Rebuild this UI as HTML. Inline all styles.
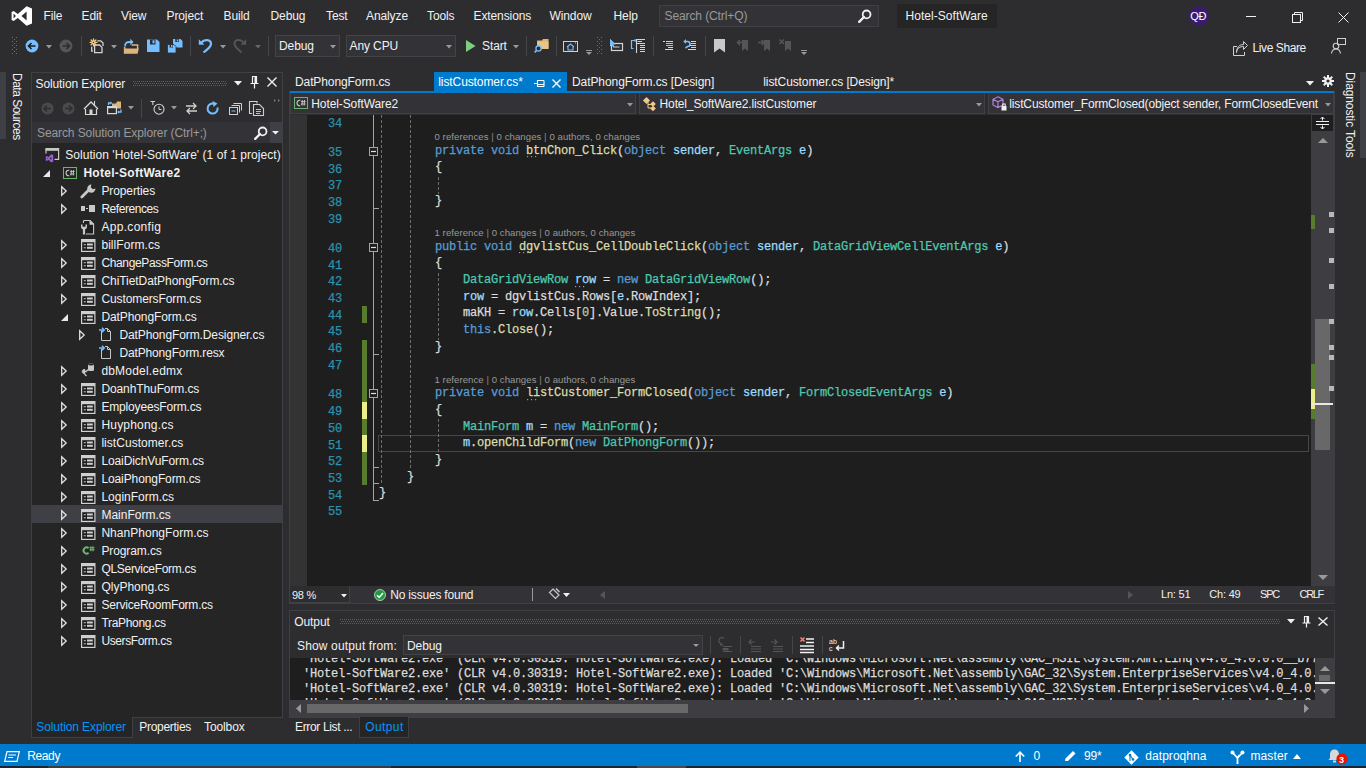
<!DOCTYPE html>
<html><head><meta charset="utf-8">
<style>
*{margin:0;padding:0;box-sizing:border-box}
html,body{width:1366px;height:768px;overflow:hidden;background:#2d2d30;font-family:"Liberation Sans",sans-serif;font-size:12px;color:#f1f1f1}
.a{position:absolute}
.t{position:absolute;white-space:pre;line-height:1;letter-spacing:-0.1px}
.c{position:absolute;white-space:pre;font-family:"Liberation Mono",monospace;font-size:12px;line-height:15px;letter-spacing:-0.2px;color:#dcdcdc;-webkit-text-stroke:0.25px currentColor}
svg{position:absolute;overflow:visible}
.k{color:#569cd6}.ty{color:#4ec9b0}.m{color:#dcdcaa}.p{color:#9cdcfe}.n{color:#b5cea8}
</style></head><body>

<div class="a" style="left:0px;top:0px;width:1366px;height:30px;background:#2d2d30;"></div>
<svg style="left:11px;top:6px" width="22" height="20" viewBox="0 0 22 20"><path d="M15.6 0.2 L21 2.6 V17.4 L15.6 19.8 L6.8 11.9 L2.6 15.1 L0.6 14.1 V5.9 L2.6 4.9 L6.8 8.1 Z M15.6 5.6 L10.5 10 L15.6 14.4 Z M2.6 7.6 V12.4 L4.9 10 Z" fill="#fff" fill-rule="evenodd"/></svg>
<div class="t" style="left:43.5px;top:9.84px;font-size:12px;color:#f1f1f1;">File</div>
<div class="t" style="left:81.5px;top:9.84px;font-size:12px;color:#f1f1f1;">Edit</div>
<div class="t" style="left:121px;top:9.84px;font-size:12px;color:#f1f1f1;">View</div>
<div class="t" style="left:166.5px;top:9.84px;font-size:12px;color:#f1f1f1;">Project</div>
<div class="t" style="left:223.5px;top:9.84px;font-size:12px;color:#f1f1f1;">Build</div>
<div class="t" style="left:270.5px;top:9.84px;font-size:12px;color:#f1f1f1;">Debug</div>
<div class="t" style="left:326px;top:9.84px;font-size:12px;color:#f1f1f1;">Test</div>
<div class="t" style="left:366px;top:9.84px;font-size:12px;color:#f1f1f1;">Analyze</div>
<div class="t" style="left:427px;top:9.84px;font-size:12px;color:#f1f1f1;">Tools</div>
<div class="t" style="left:473.5px;top:9.84px;font-size:12px;color:#f1f1f1;">Extensions</div>
<div class="t" style="left:549.5px;top:9.84px;font-size:12px;color:#f1f1f1;">Window</div>
<div class="t" style="left:613.5px;top:9.84px;font-size:12px;color:#f1f1f1;">Help</div>
<div class="a" style="left:659px;top:5px;width:220px;height:22px;background:#333337;border:1px solid #3f3f46"></div>
<div class="t" style="left:664.5px;top:9.84px;font-size:12px;color:#999999;">Search (Ctrl+Q)</div>
<svg style="left:858px;top:9px" width="14" height="14" viewBox="0 0 14 14"><circle cx="8.6" cy="5.4" r="3.9" fill="none" stroke="#f1f1f1" stroke-width="1.8"/><path d="M6 8 L1.2 12.8" stroke="#f1f1f1" stroke-width="2.4" stroke-linecap="round"/></svg>
<div class="a" style="left:897px;top:4px;width:100px;height:24px;background:#252526;"></div>
<div class="t" style="left:905.5px;top:9.84px;font-size:12px;color:#f1f1f1;letter-spacing:0.05px">Hotel-SoftWare</div>
<svg style="left:1189px;top:6px" width="20" height="20" viewBox="0 0 20 20"><circle cx="10" cy="10" r="10" fill="#3b1b6e"/></svg>
<div class="t" style="left:1190.3px;top:11.19px;font-size:11px;color:#ffffff;letter-spacing:-0.4px">QĐ</div>
<div class="a" style="left:1246px;top:16px;width:10px;height:1px;background:#f1f1f1;"></div>
<svg style="left:1292px;top:12px" width="11" height="11" viewBox="0 0 11 11"><path d="M2.5 2.5 V0.5 H10.5 V8.5 H8.5" fill="none" stroke="#f1f1f1" stroke-width="1"/><rect x="0.5" y="2.5" width="8" height="8" fill="none" stroke="#f1f1f1" stroke-width="1"/></svg>
<svg style="left:1338px;top:12px" width="11" height="11" viewBox="0 0 11 11"><path d="M0.5 0.5 L10.5 10.5 M10.5 0.5 L0.5 10.5" stroke="#f1f1f1" stroke-width="1"/></svg>
<svg style="left:12px;top:37px" width="6" height="18" viewBox="0 0 6 18"><rect x="0" y="0" width="1" height="1" fill="#707070"/><rect x="4" y="0" width="1" height="1" fill="#707070"/><rect x="2" y="2" width="1" height="1" fill="#707070"/><rect x="0" y="4" width="1" height="1" fill="#707070"/><rect x="4" y="4" width="1" height="1" fill="#707070"/><rect x="2" y="6" width="1" height="1" fill="#707070"/><rect x="0" y="8" width="1" height="1" fill="#707070"/><rect x="4" y="8" width="1" height="1" fill="#707070"/><rect x="2" y="10" width="1" height="1" fill="#707070"/><rect x="0" y="12" width="1" height="1" fill="#707070"/><rect x="4" y="12" width="1" height="1" fill="#707070"/><rect x="2" y="14" width="1" height="1" fill="#707070"/><rect x="0" y="16" width="1" height="1" fill="#707070"/><rect x="4" y="16" width="1" height="1" fill="#707070"/></svg>
<svg style="left:25px;top:39px" width="14" height="14" viewBox="0 0 14 14"><circle cx="7" cy="7" r="6.4" fill="#75beff"/><path d="M3.5 7 H10.5 M6.5 4 L3.5 7 L6.5 10" fill="none" stroke="#1e1e1e" stroke-width="1.6"/></svg>
<svg style="left:46px;top:45px" width="6" height="3.5" viewBox="0 0 6 3.5"><path d="M0 0 H6 L3.0 3.5 Z" fill="#999999"/></svg>
<svg style="left:59px;top:39px" width="14" height="14" viewBox="0 0 14 14"><circle cx="7" cy="7" r="6.4" fill="#555557"/><path d="M3.5 7 H10.5 M7.5 4 L10.5 7 L7.5 10" fill="none" stroke="#2d2d30" stroke-width="1.6"/></svg>
<div class="a" style="left:81px;top:36px;width:1px;height:20px;background:#46464a;"></div>
<svg style="left:89px;top:38px" width="16" height="16" viewBox="0 0 16 16"><path d="M8.3 2.8 H11.8 L14 5 V8" fill="none" stroke="#d4d4d4" stroke-width="1.3"/><path d="M2.7 8.8 V13 H3.8" fill="none" stroke="#d4d4d4" stroke-width="1.3"/><path d="M5.6 7 H10.6 L13 9.4 V14.6 H5.6 Z" fill="#2d2d30" stroke="#d4d4d4" stroke-width="1.3"/><g stroke="#f5c978" stroke-width="1.3" stroke-linecap="round"><path d="M4.5 1 V7.8 M1.1 4.4 H7.9 M2.1 2 L6.9 6.8 M6.9 2 L2.1 6.8"/></g><circle cx="4.5" cy="4.4" r="1.5" fill="#f5c978"/><circle cx="4.5" cy="4.4" r="0.6" fill="#2d2d30"/></svg>
<svg style="left:111px;top:45px" width="6" height="3.5" viewBox="0 0 6 3.5"><path d="M0 0 H6 L3.0 3.5 Z" fill="#999999"/></svg>
<svg style="left:122px;top:38px" width="17" height="17" viewBox="0 0 17 17"><path d="M2.6 15.5 V9" fill="none" stroke="#dcb67a" stroke-width="1.5"/><path d="M9.5 7 H15.6 V11" fill="none" stroke="#dcb67a" stroke-width="1.5"/><path d="M2 10.5 H16.8 L15.6 15.8 H2 Z" fill="#dcb67a"/><path d="M3.3 8.5 C2.6 5.5 4.3 4 7.8 4 H9" fill="none" stroke="#75beff" stroke-width="1.8"/><path d="M8.3 0.8 L11.6 4 L8.3 7.2 Z" fill="#75beff"/></svg>
<svg style="left:147px;top:39px" width="13" height="14" viewBox="0 0 13 14"><path d="M0 0.5 H10 L12.5 3 V13 H0 Z" fill="#75beff"/><rect x="3" y="0.5" width="5.5" height="5" fill="#2d2d30"/><rect x="5.5" y="1.3" width="2" height="3" fill="#75beff"/></svg>
<svg style="left:167px;top:38px" width="16" height="16" viewBox="0 0 16 16"><path d="M6 1 H13.5 L15.5 3 V9.5 H6 Z" fill="#75beff"/><rect x="8.3" y="1" width="3.6" height="3" fill="#2d2d30"/><rect x="9.8" y="1.5" width="1.4" height="2" fill="#75beff"/><path d="M0.5 6.5 H7 L9 8.5 V15 H0.5 Z" fill="#75beff" stroke="#2d2d30" stroke-width="0.8"/><rect x="2.6" y="6.5" width="3.4" height="3" fill="#2d2d30"/><rect x="4" y="7" width="1.4" height="2" fill="#75beff"/></svg>
<div class="a" style="left:190px;top:36px;width:1px;height:20px;background:#46464a;"></div>
<svg style="left:197px;top:37px" width="16" height="17" viewBox="0 0 16 17"><path d="M4.5 5.5 C7 2 14 2 14 7 C14 9.5 11.5 11.5 6.5 15.5" fill="none" stroke="#75beff" stroke-width="2.2"/><path d="M1.8 2.2 V7.8 H7.4 Z" fill="#75beff"/></svg>
<svg style="left:220px;top:45px" width="6" height="3.5" viewBox="0 0 6 3.5"><path d="M0 0 H6 L3.0 3.5 Z" fill="#999999"/></svg>
<svg style="left:233px;top:37px" width="16" height="17" viewBox="0 0 16 17"><path d="M10.5 5.5 C8 2 1.5 2 1.5 7 C1.5 9.5 4 11.5 8.5 15.5" fill="none" stroke="#555557" stroke-width="2"/><path d="M13.2 2.2 V7.8 H7.6 Z" fill="#555557"/></svg>
<svg style="left:255px;top:45px" width="6" height="3.5" viewBox="0 0 6 3.5"><path d="M0 0 H6 L3.0 3.5 Z" fill="#666"/></svg>
<div class="a" style="left:268px;top:36px;width:1px;height:20px;background:#46464a;"></div>
<div class="a" style="left:275px;top:35px;width:65px;height:22px;background:#333337;border:1px solid #434346"></div>
<div class="t" style="left:279px;top:40.34px;font-size:12px;color:#f1f1f1;">Debug</div>
<svg style="left:330px;top:45px" width="6" height="3.5" viewBox="0 0 6 3.5"><path d="M0 0 H6 L3.0 3.5 Z" fill="#999999"/></svg>
<div class="a" style="left:346px;top:35px;width:110px;height:22px;background:#333337;border:1px solid #434346"></div>
<div class="t" style="left:349.5px;top:40.34px;font-size:12px;color:#f1f1f1;">Any CPU</div>
<svg style="left:446px;top:45px" width="6" height="3.5" viewBox="0 0 6 3.5"><path d="M0 0 H6 L3.0 3.5 Z" fill="#999999"/></svg>
<svg style="left:466px;top:40px" width="10" height="12" viewBox="0 0 10 12"><path d="M0 0 L9.6 6 L0 12 Z" fill="#80cc80"/></svg>
<div class="t" style="left:482px;top:40.34px;font-size:12px;color:#f1f1f1;">Start</div>
<svg style="left:513px;top:45px" width="6" height="3.5" viewBox="0 0 6 3.5"><path d="M0 0 H6 L3.0 3.5 Z" fill="#999999"/></svg>
<div class="a" style="left:526px;top:36px;width:1px;height:20px;background:#46464a;"></div>
<svg style="left:534px;top:38px" width="15" height="15" viewBox="0 0 15 15"><path d="M3 2.5 H8 L9 1 H14.5 V10.5 H3 Z" fill="#dcb67a"/><path d="M3.5 3.5 H14.5 V11 H3.5 Z" fill="#e8c48a"/><circle cx="4.5" cy="10.5" r="2.6" fill="#2d2d30" stroke="#75beff" stroke-width="1.3"/><path d="M2.6 12.4 L0.6 14.4" stroke="#75beff" stroke-width="1.6"/></svg>
<div class="a" style="left:556px;top:36px;width:1px;height:20px;background:#46464a;"></div>
<svg style="left:563px;top:41px" width="15" height="11" viewBox="0 0 15 11"><rect x="0.5" y="0.5" width="14" height="10" fill="none" stroke="#d0d0d0"/><path d="M4 6 L7.5 3 L11 6 M5 5.5 V9 H10 V5.5" fill="none" stroke="#75beff" stroke-width="1.1"/><path d="M12 2 H13" stroke="#d0d0d0"/></svg>
<svg style="left:586px;top:50px" width="6" height="5" viewBox="0 0 6 5"><rect x="0" y="0" width="6" height="1" fill="#999"/><path d="M0 2 H6 L3 5 Z" fill="#999"/></svg>
<svg style="left:597px;top:37px" width="6" height="18" viewBox="0 0 6 18"><rect x="0" y="0" width="1" height="1" fill="#707070"/><rect x="4" y="0" width="1" height="1" fill="#707070"/><rect x="2" y="2" width="1" height="1" fill="#707070"/><rect x="0" y="4" width="1" height="1" fill="#707070"/><rect x="4" y="4" width="1" height="1" fill="#707070"/><rect x="2" y="6" width="1" height="1" fill="#707070"/><rect x="0" y="8" width="1" height="1" fill="#707070"/><rect x="4" y="8" width="1" height="1" fill="#707070"/><rect x="2" y="10" width="1" height="1" fill="#707070"/><rect x="0" y="12" width="1" height="1" fill="#707070"/><rect x="4" y="12" width="1" height="1" fill="#707070"/><rect x="2" y="14" width="1" height="1" fill="#707070"/><rect x="0" y="16" width="1" height="1" fill="#707070"/><rect x="4" y="16" width="1" height="1" fill="#707070"/></svg>
<svg style="left:609px;top:38px" width="15" height="15" viewBox="0 0 15 15"><path d="M1 1 L1 8.5 L2.8 6.8 L4.3 9.6 L5.4 9 L4.1 6.3 L6.6 6.2 Z" fill="#75beff"/><rect x="2.5" y="5.5" width="11" height="7" fill="none" stroke="#d4d4d4" stroke-width="1.2"/><path d="M5 9 H10.5" stroke="#d4d4d4" stroke-width="1"/><path d="M1 1 L1 8.5 L2.8 6.8 L4.3 9.6 L5.4 9 L4.1 6.3 L6.6 6.2 Z" fill="#75beff"/></svg>
<svg style="left:630px;top:38px" width="16" height="16" viewBox="0 0 16 16"><path d="M3.5 2.5 H1.5 V10.5 H3.5" fill="none" stroke="#75beff" stroke-width="1.2"/><path d="M3 2.5 H5.5 M4.5 1 L6 2.5 L4.5 4" fill="none" stroke="#75beff" stroke-width="1"/><path d="M6.5 1 V15" stroke="#d4d4d4" stroke-width="1.1"/><path d="M6.5 1.5 H15 M7.5 3.5 H12 M6.5 5.5 H15 M10 7.5 H15 M10 9.5 H15 M10 11.5 H15 M10 13.5 H15" stroke="#d4d4d4" stroke-width="1"/></svg>
<div class="a" style="left:653px;top:36px;width:1px;height:20px;background:#46464a;"></div>
<svg style="left:662px;top:40px" width="12" height="11" viewBox="0 0 12 11"><path d="M1 1.5 H3 M4 1.5 H11 M6 7.5 H11 M3 9.5 H11" stroke="#d4d4d4" stroke-width="1"/><path d="M4 3.5 H11 M4 5.5 H11" stroke="#8ae28a" stroke-width="1"/></svg>
<svg style="left:683px;top:39px" width="14" height="14" viewBox="0 0 14 14"><path d="M1.5 2.5 H4.5 A2.5 2.5 0 0 1 4.5 7.5 L2.5 9" fill="none" stroke="#75beff" stroke-width="1.6"/><path d="M0.3 2.5 L3 0 V5 Z" fill="#75beff"/><path d="M8 2.5 H13 M8 4.5 H13 M7 6.5 H13 M8 8.5 H13 M5 10.5 H13" stroke="#d4d4d4" stroke-width="1"/></svg>
<div class="a" style="left:705px;top:36px;width:1px;height:20px;background:#46464a;"></div>
<svg style="left:714px;top:39px" width="11" height="14" viewBox="0 0 11 14"><path d="M0 0 H11 V13.5 L5.5 9.5 L0 13.5 Z" fill="#c8c8c8"/></svg>
<svg style="left:737px;top:39px" width="12" height="13" viewBox="0 0 12 13"><path d="M5 1 H11 V12 L8 9.5 L5 12 Z" fill="#555557"/><path d="M0.5 3.5 H6 M3 1 L0.5 3.5 L3 6" fill="none" stroke="#555557" stroke-width="1.6"/></svg>
<svg style="left:758px;top:39px" width="13" height="13" viewBox="0 0 13 13"><path d="M6 1 H12 V12 L9 9.5 L6 12 Z" fill="#555557"/><path d="M0 3.5 H6 M3.5 1 L6 3.5 L3.5 6" fill="none" stroke="#555557" stroke-width="1.6"/></svg>
<svg style="left:779px;top:39px" width="13" height="13" viewBox="0 0 13 13"><path d="M6 2 H12 V12 L9 9.5 L6 12 Z" fill="#555557"/><path d="M0.5 0.5 L5 5 M5 0.5 L0.5 5" fill="none" stroke="#555557" stroke-width="1.5"/></svg>
<svg style="left:801px;top:50px" width="6" height="5" viewBox="0 0 6 5"><rect x="0" y="0" width="6" height="1" fill="#999"/><path d="M0 2 H6 L3 5 Z" fill="#999"/></svg>
<svg style="left:1233px;top:41px" width="15" height="15" viewBox="0 0 15 15"><path d="M4 5.5 H0.5 V14.5 H11.5 V11" fill="none" stroke="#d0d0d0" stroke-width="1"/><path d="M3.5 11.5 C4 7 7 5.5 10.5 5.5 V8.5 L14.5 4.5 L10.5 0.5 V3.5 C6 3.5 3.5 7 3.5 11.5 Z" fill="none" stroke="#d0d0d0" stroke-width="1"/></svg>
<div class="t" style="left:1252.5px;top:41.84px;font-size:12px;color:#f1f1f1;letter-spacing:-0.4px">Live Share</div>
<svg style="left:1331px;top:38px" width="15" height="16" viewBox="0 0 15 16"><rect x="6.5" y="0.5" width="8" height="6" fill="none" stroke="#d0d0d0"/><circle cx="5" cy="8" r="2.8" fill="none" stroke="#d0d0d0" stroke-width="1.1"/><path d="M0.5 15.5 C1 12 3 11 5 11 C7 11 9 12 9.5 15.5" fill="none" stroke="#d0d0d0" stroke-width="1.1"/></svg>
<div class="a" style="left:0px;top:72px;width:6px;height:67px;background:#3f3f46;"></div>
<div class="t" style="left:23px;top:73px;font-size:12px;color:#f1f1f1;transform-origin:0 0;transform:rotate(90deg);letter-spacing:-0.5px">Data Sources</div>
<div class="a" style="left:31px;top:72px;width:252px;height:646px;background:#252526;border:1px solid #3f3f46"></div>
<div class="a" style="left:32px;top:73px;width:250px;height:70px;background:#2d2d30;"></div>
<div class="t" style="left:35.5px;top:78.44px;font-size:12px;color:#f1f1f1;">Solution Explorer</div>
<svg style="left:133px;top:81px" width="95" height="6" viewBox="0 0 95 6"><rect x="0" y="0" width="1" height="1" fill="#5e5e62"/><rect x="1" y="2" width="1" height="1" fill="#5e5e62"/><rect x="0" y="4" width="1" height="1" fill="#5e5e62"/><rect x="2" y="0" width="1" height="1" fill="#5e5e62"/><rect x="3" y="2" width="1" height="1" fill="#5e5e62"/><rect x="2" y="4" width="1" height="1" fill="#5e5e62"/><rect x="4" y="0" width="1" height="1" fill="#5e5e62"/><rect x="5" y="2" width="1" height="1" fill="#5e5e62"/><rect x="4" y="4" width="1" height="1" fill="#5e5e62"/><rect x="6" y="0" width="1" height="1" fill="#5e5e62"/><rect x="7" y="2" width="1" height="1" fill="#5e5e62"/><rect x="6" y="4" width="1" height="1" fill="#5e5e62"/><rect x="8" y="0" width="1" height="1" fill="#5e5e62"/><rect x="9" y="2" width="1" height="1" fill="#5e5e62"/><rect x="8" y="4" width="1" height="1" fill="#5e5e62"/><rect x="10" y="0" width="1" height="1" fill="#5e5e62"/><rect x="11" y="2" width="1" height="1" fill="#5e5e62"/><rect x="10" y="4" width="1" height="1" fill="#5e5e62"/><rect x="12" y="0" width="1" height="1" fill="#5e5e62"/><rect x="13" y="2" width="1" height="1" fill="#5e5e62"/><rect x="12" y="4" width="1" height="1" fill="#5e5e62"/><rect x="14" y="0" width="1" height="1" fill="#5e5e62"/><rect x="15" y="2" width="1" height="1" fill="#5e5e62"/><rect x="14" y="4" width="1" height="1" fill="#5e5e62"/><rect x="16" y="0" width="1" height="1" fill="#5e5e62"/><rect x="17" y="2" width="1" height="1" fill="#5e5e62"/><rect x="16" y="4" width="1" height="1" fill="#5e5e62"/><rect x="18" y="0" width="1" height="1" fill="#5e5e62"/><rect x="19" y="2" width="1" height="1" fill="#5e5e62"/><rect x="18" y="4" width="1" height="1" fill="#5e5e62"/><rect x="20" y="0" width="1" height="1" fill="#5e5e62"/><rect x="21" y="2" width="1" height="1" fill="#5e5e62"/><rect x="20" y="4" width="1" height="1" fill="#5e5e62"/><rect x="22" y="0" width="1" height="1" fill="#5e5e62"/><rect x="23" y="2" width="1" height="1" fill="#5e5e62"/><rect x="22" y="4" width="1" height="1" fill="#5e5e62"/><rect x="24" y="0" width="1" height="1" fill="#5e5e62"/><rect x="25" y="2" width="1" height="1" fill="#5e5e62"/><rect x="24" y="4" width="1" height="1" fill="#5e5e62"/><rect x="26" y="0" width="1" height="1" fill="#5e5e62"/><rect x="27" y="2" width="1" height="1" fill="#5e5e62"/><rect x="26" y="4" width="1" height="1" fill="#5e5e62"/><rect x="28" y="0" width="1" height="1" fill="#5e5e62"/><rect x="29" y="2" width="1" height="1" fill="#5e5e62"/><rect x="28" y="4" width="1" height="1" fill="#5e5e62"/><rect x="30" y="0" width="1" height="1" fill="#5e5e62"/><rect x="31" y="2" width="1" height="1" fill="#5e5e62"/><rect x="30" y="4" width="1" height="1" fill="#5e5e62"/><rect x="32" y="0" width="1" height="1" fill="#5e5e62"/><rect x="33" y="2" width="1" height="1" fill="#5e5e62"/><rect x="32" y="4" width="1" height="1" fill="#5e5e62"/><rect x="34" y="0" width="1" height="1" fill="#5e5e62"/><rect x="35" y="2" width="1" height="1" fill="#5e5e62"/><rect x="34" y="4" width="1" height="1" fill="#5e5e62"/><rect x="36" y="0" width="1" height="1" fill="#5e5e62"/><rect x="37" y="2" width="1" height="1" fill="#5e5e62"/><rect x="36" y="4" width="1" height="1" fill="#5e5e62"/><rect x="38" y="0" width="1" height="1" fill="#5e5e62"/><rect x="39" y="2" width="1" height="1" fill="#5e5e62"/><rect x="38" y="4" width="1" height="1" fill="#5e5e62"/><rect x="40" y="0" width="1" height="1" fill="#5e5e62"/><rect x="41" y="2" width="1" height="1" fill="#5e5e62"/><rect x="40" y="4" width="1" height="1" fill="#5e5e62"/><rect x="42" y="0" width="1" height="1" fill="#5e5e62"/><rect x="43" y="2" width="1" height="1" fill="#5e5e62"/><rect x="42" y="4" width="1" height="1" fill="#5e5e62"/><rect x="44" y="0" width="1" height="1" fill="#5e5e62"/><rect x="45" y="2" width="1" height="1" fill="#5e5e62"/><rect x="44" y="4" width="1" height="1" fill="#5e5e62"/><rect x="46" y="0" width="1" height="1" fill="#5e5e62"/><rect x="47" y="2" width="1" height="1" fill="#5e5e62"/><rect x="46" y="4" width="1" height="1" fill="#5e5e62"/><rect x="48" y="0" width="1" height="1" fill="#5e5e62"/><rect x="49" y="2" width="1" height="1" fill="#5e5e62"/><rect x="48" y="4" width="1" height="1" fill="#5e5e62"/><rect x="50" y="0" width="1" height="1" fill="#5e5e62"/><rect x="51" y="2" width="1" height="1" fill="#5e5e62"/><rect x="50" y="4" width="1" height="1" fill="#5e5e62"/><rect x="52" y="0" width="1" height="1" fill="#5e5e62"/><rect x="53" y="2" width="1" height="1" fill="#5e5e62"/><rect x="52" y="4" width="1" height="1" fill="#5e5e62"/><rect x="54" y="0" width="1" height="1" fill="#5e5e62"/><rect x="55" y="2" width="1" height="1" fill="#5e5e62"/><rect x="54" y="4" width="1" height="1" fill="#5e5e62"/><rect x="56" y="0" width="1" height="1" fill="#5e5e62"/><rect x="57" y="2" width="1" height="1" fill="#5e5e62"/><rect x="56" y="4" width="1" height="1" fill="#5e5e62"/><rect x="58" y="0" width="1" height="1" fill="#5e5e62"/><rect x="59" y="2" width="1" height="1" fill="#5e5e62"/><rect x="58" y="4" width="1" height="1" fill="#5e5e62"/><rect x="60" y="0" width="1" height="1" fill="#5e5e62"/><rect x="61" y="2" width="1" height="1" fill="#5e5e62"/><rect x="60" y="4" width="1" height="1" fill="#5e5e62"/><rect x="62" y="0" width="1" height="1" fill="#5e5e62"/><rect x="63" y="2" width="1" height="1" fill="#5e5e62"/><rect x="62" y="4" width="1" height="1" fill="#5e5e62"/><rect x="64" y="0" width="1" height="1" fill="#5e5e62"/><rect x="65" y="2" width="1" height="1" fill="#5e5e62"/><rect x="64" y="4" width="1" height="1" fill="#5e5e62"/><rect x="66" y="0" width="1" height="1" fill="#5e5e62"/><rect x="67" y="2" width="1" height="1" fill="#5e5e62"/><rect x="66" y="4" width="1" height="1" fill="#5e5e62"/><rect x="68" y="0" width="1" height="1" fill="#5e5e62"/><rect x="69" y="2" width="1" height="1" fill="#5e5e62"/><rect x="68" y="4" width="1" height="1" fill="#5e5e62"/><rect x="70" y="0" width="1" height="1" fill="#5e5e62"/><rect x="71" y="2" width="1" height="1" fill="#5e5e62"/><rect x="70" y="4" width="1" height="1" fill="#5e5e62"/><rect x="72" y="0" width="1" height="1" fill="#5e5e62"/><rect x="73" y="2" width="1" height="1" fill="#5e5e62"/><rect x="72" y="4" width="1" height="1" fill="#5e5e62"/><rect x="74" y="0" width="1" height="1" fill="#5e5e62"/><rect x="75" y="2" width="1" height="1" fill="#5e5e62"/><rect x="74" y="4" width="1" height="1" fill="#5e5e62"/><rect x="76" y="0" width="1" height="1" fill="#5e5e62"/><rect x="77" y="2" width="1" height="1" fill="#5e5e62"/><rect x="76" y="4" width="1" height="1" fill="#5e5e62"/><rect x="78" y="0" width="1" height="1" fill="#5e5e62"/><rect x="79" y="2" width="1" height="1" fill="#5e5e62"/><rect x="78" y="4" width="1" height="1" fill="#5e5e62"/><rect x="80" y="0" width="1" height="1" fill="#5e5e62"/><rect x="81" y="2" width="1" height="1" fill="#5e5e62"/><rect x="80" y="4" width="1" height="1" fill="#5e5e62"/><rect x="82" y="0" width="1" height="1" fill="#5e5e62"/><rect x="83" y="2" width="1" height="1" fill="#5e5e62"/><rect x="82" y="4" width="1" height="1" fill="#5e5e62"/><rect x="84" y="0" width="1" height="1" fill="#5e5e62"/><rect x="85" y="2" width="1" height="1" fill="#5e5e62"/><rect x="84" y="4" width="1" height="1" fill="#5e5e62"/><rect x="86" y="0" width="1" height="1" fill="#5e5e62"/><rect x="87" y="2" width="1" height="1" fill="#5e5e62"/><rect x="86" y="4" width="1" height="1" fill="#5e5e62"/><rect x="88" y="0" width="1" height="1" fill="#5e5e62"/><rect x="89" y="2" width="1" height="1" fill="#5e5e62"/><rect x="88" y="4" width="1" height="1" fill="#5e5e62"/><rect x="90" y="0" width="1" height="1" fill="#5e5e62"/><rect x="91" y="2" width="1" height="1" fill="#5e5e62"/><rect x="90" y="4" width="1" height="1" fill="#5e5e62"/><rect x="92" y="0" width="1" height="1" fill="#5e5e62"/><rect x="93" y="2" width="1" height="1" fill="#5e5e62"/><rect x="92" y="4" width="1" height="1" fill="#5e5e62"/></svg>
<svg style="left:234px;top:81px" width="8" height="5" viewBox="0 0 8 5"><path d="M0 0 H8 L4 4.5 Z" fill="#f1f1f1"/></svg>
<svg style="left:250px;top:76px" width="9" height="13" viewBox="0 0 9 13"><path d="M2 0.5 H7 M2.5 0.5 V7.5 M6.5 0.5 V7.5 M0.5 7.5 H8.5 M4.5 7.5 V12.5" fill="none" stroke="#f1f1f1" stroke-width="1.2"/><rect x="4.5" y="1" width="2" height="6" fill="#f1f1f1"/></svg>
<svg style="left:267px;top:77px" width="10" height="10" viewBox="0 0 10 10"><path d="M0.5 0.5 L9.5 9.5 M9.5 0.5 L0.5 9.5" stroke="#f1f1f1" stroke-width="1.4"/></svg>
<svg style="left:41px;top:102px" width="13" height="13" viewBox="0 0 13 13"><circle cx="6.5" cy="6.5" r="6" fill="#4a4a4d"/><path d="M3 6.5 H10 M6 3.5 L3 6.5 L6 9.5" fill="none" stroke="#2d2d30" stroke-width="1.5"/></svg>
<svg style="left:62px;top:102px" width="13" height="13" viewBox="0 0 13 13"><circle cx="6.5" cy="6.5" r="6" fill="#4a4a4d"/><path d="M3 6.5 H10 M7 3.5 L10 6.5 L7 9.5" fill="none" stroke="#2d2d30" stroke-width="1.5"/></svg>
<svg style="left:83px;top:100px" width="16" height="16" viewBox="0 0 16 16"><path d="M2.5 8.5 V14.5 H13.5 V8.5" fill="#2d2d30" stroke="#d8d8d8" stroke-width="1.2"/><path d="M1 9 L8 2 L15 9" fill="#2d2d30" stroke="#d8d8d8" stroke-width="1.3"/><path d="M11.5 1 V5" stroke="#d8d8d8" stroke-width="1.1"/><rect x="6.5" y="9.5" width="3" height="5" fill="#d8d8d8"/></svg>
<svg style="left:107px;top:100px" width="16" height="15" viewBox="0 0 16 15"><path d="M5 3.5 H9 L10 1.5 H14 V8.5 H5 Z" fill="#dcb67a"/><rect x="0.6" y="6.6" width="8.8" height="7" fill="#2d2d30" stroke="#d8d8d8" stroke-width="1.2"/><rect x="0.6" y="6.6" width="8.8" height="1.6" fill="#d8d8d8"/><path d="M1.5 5 V3 H4" fill="none" stroke="#75beff" stroke-width="1.3"/><path d="M3.5 1.2 L5.3 3 L3.5 4.8 Z" fill="#75beff"/><path d="M14 9.5 V12 H11.5" fill="none" stroke="#75beff" stroke-width="1.3"/><path d="M12 10.2 L10.2 12 L12 13.8 Z" fill="#75beff"/></svg>
<svg style="left:128px;top:106px" width="6" height="3.5" viewBox="0 0 6 3.5"><path d="M0 0 H6 L3.0 3.5 Z" fill="#999999"/></svg>
<div class="a" style="left:141px;top:99px;width:1px;height:19px;background:#46464a;"></div>
<svg style="left:150px;top:101px" width="15" height="14" viewBox="0 0 15 14"><circle cx="9" cy="8.2" r="5" fill="none" stroke="#d0d0d0" stroke-width="1.1"/><path d="M9 5.5 V8.5 H11.5" fill="none" stroke="#d0d0d0"/><path d="M0.5 0.5 H5 M2.8 0.5 V4" stroke="#d0d0d0" stroke-width="1.1"/></svg>
<svg style="left:171px;top:106px" width="6" height="3.5" viewBox="0 0 6 3.5"><path d="M0 0 H6 L3.0 3.5 Z" fill="#999999"/></svg>
<svg style="left:185px;top:102px" width="13" height="13" viewBox="0 0 13 13"><path d="M1 4 H11 M8 1 L11 4 L8 7 M12 9 H2 M5 6 L2 9 L5 12" fill="none" stroke="#d0d0d0" stroke-width="1.3"/></svg>
<svg style="left:206px;top:101px" width="14" height="15" viewBox="0 0 14 15"><path d="M11.5 6.5 A5 5 0 1 1 8 2.8" fill="none" stroke="#75beff" stroke-width="2"/><path d="M6.5 0 L11.5 2.5 L7.5 6 Z" fill="#75beff"/></svg>
<svg style="left:229px;top:103px" width="13" height="12" viewBox="0 0 13 12"><rect x="0.5" y="4.5" width="8" height="7" fill="#2d2d30" stroke="#d0d0d0"/><path d="M2.5 2.5 H10.5 V9.5 M4.5 0.5 H12.5 V7.5" fill="none" stroke="#d0d0d0"/><path d="M2.5 8 H6.5" stroke="#75beff"/></svg>
<svg style="left:249px;top:101px" width="15" height="15" viewBox="0 0 15 15"><path d="M3 12.5 H0.5 V0.5 H8 V2.5" fill="none" stroke="#d0d0d0" stroke-width="1.1"/><path d="M4.5 3.5 H10.5 L14.5 7.5 V14.5 H4.5 Z" fill="#2d2d30" stroke="#d0d0d0" stroke-width="1.1"/><path d="M7 8.5 H12 M7 10.5 H12 M7 12.5 H11" stroke="#d0d0d0" stroke-width="0.9"/></svg>
<svg style="left:274px;top:99px" width="7" height="3" viewBox="0 0 7 3"><path d="M0 0 L2 1.5 L0 3 Z M4 0 L6 1.5 L4 3 Z" fill="#777"/></svg>
<div class="a" style="left:32px;top:122px;width:250px;height:21px;background:#333337;"></div>
<div class="a" style="left:270px;top:122px;width:12px;height:21px;background:#3f3f46;"></div>
<div class="t" style="left:37px;top:126.64px;font-size:12px;color:#999999;">Search Solution Explorer (Ctrl+;)</div>
<svg style="left:254px;top:126px" width="14" height="14" viewBox="0 0 14 14"><circle cx="8.6" cy="5.4" r="3.9" fill="none" stroke="#f1f1f1" stroke-width="1.8"/><path d="M6 8 L1.2 12.8" stroke="#f1f1f1" stroke-width="2.4" stroke-linecap="round"/></svg>
<svg style="left:272px;top:131px" width="7" height="4" viewBox="0 0 7 4"><path d="M0 0 H7 L3.5 3.5 Z" fill="#f1f1f1"/></svg>
<svg style="left:45px;top:148px" width="15" height="15" viewBox="0 0 15 15"><path d="M1 5.5 V0.6 H13.6 V11.4 H9.5" fill="none" stroke="#c8c8c8" stroke-width="1.2"/><rect x="0.6" y="0.6" width="13" height="2.2" fill="#c8c8c8"/><path d="M6.3 6.2 L8.2 7.1 V13.5 L6.3 14.4 L3.4 11.7 L1.8 13 L0.8 12.5 V8.4 L1.8 7.9 L3.4 9.2 Z M6.3 8.7 L4.6 10.4 L6.3 12 Z M1.8 9.6 V11.3 L2.7 10.45 Z" fill="#9b5fe0" fill-rule="evenodd"/></svg>
<div class="t" style="left:65.2px;top:148.74px;font-size:12px;color:#f1f1f1;letter-spacing:0.046px">Solution &#x27;Hotel-SoftWare&#x27; (1 of 1 project)</div>
<svg style="left:42.5px;top:169.5px" width="7" height="7" viewBox="0 0 7 7"><path d="M7 0 V7 H0 Z" fill="#e8e8e8"/></svg>
<svg style="left:63px;top:167px" width="14" height="12" viewBox="0 0 14 12"><rect x="0.5" y="0.5" width="13" height="11" fill="none" stroke="#6db56d"/><path d="M6.3 3.3 A2.6 2.8 0 1 0 6.3 8.7" fill="none" stroke="#cfcfcf" stroke-width="1.1"/><path d="M8.3 3 L8 8.5 M10.5 3 L10.2 8.5 M7.2 4.6 H11.6 M7 7 H11.4" stroke="#cfcfcf" stroke-width="0.9"/></svg>
<div class="t" style="left:83.4px;top:166.74px;font-size:12px;color:#f1f1f1;font-weight:bold;letter-spacing:0.271px">Hotel-SoftWare2</div>
<svg style="left:61px;top:186px" width="6" height="10" viewBox="0 0 6 10"><path d="M0.7 0.8 L5.2 5 L0.7 9.2 Z" fill="none" stroke="#e0e0e0" stroke-width="1.3"/></svg>
<svg style="left:80px;top:184px" width="16" height="15" viewBox="0 0 16 15"><path d="M1.8 13 L8.5 6.3" stroke="#c8c8c8" stroke-width="2.8" stroke-linecap="round"/><path d="M11.4 0.6 A4.1 4.1 0 1 0 15.4 4.6 L12.8 5.2 L10.8 3.2 Z" fill="#c8c8c8"/></svg>
<div class="t" style="left:101.4px;top:184.74px;font-size:12px;color:#f1f1f1;letter-spacing:-0.100px">Properties</div>
<svg style="left:61px;top:204px" width="6" height="10" viewBox="0 0 6 10"><path d="M0.7 0.8 L5.2 5 L0.7 9.2 Z" fill="none" stroke="#e0e0e0" stroke-width="1.3"/></svg>
<svg style="left:81px;top:204px" width="15" height="9" viewBox="0 0 15 9"><rect x="0" y="2" width="4" height="5" fill="#c8c8c8"/><rect x="8" y="1" width="6" height="7" fill="#c8c8c8"/><rect x="5" y="4" width="2" height="1" fill="#c8c8c8"/></svg>
<div class="t" style="left:101.4px;top:202.74px;font-size:12px;color:#f1f1f1;letter-spacing:-0.433px">References</div>
<svg style="left:80px;top:219px" width="15" height="16" viewBox="0 0 15 16"><path d="M3.5 1.5 H10 L13.6 5.1 V15 H6" fill="#1e1e1e" stroke="#c8c8c8" stroke-width="1.1"/><path d="M10 1.5 V5.1 H13.6" fill="#c8c8c8" stroke="#c8c8c8" stroke-width="1.1"/><path d="M3.5 1.5 V4" stroke="#c8c8c8" stroke-width="1.1"/><path d="M4 15.5 V10" stroke="#c8c8c8" stroke-width="2.2"/><path d="M1 5.5 V7.5 A3 3 0 0 0 7 7.5 V5.5 H5.5 V7.8 H2.5 V5.5 Z" fill="#c8c8c8"/></svg>
<div class="t" style="left:101.4px;top:220.74px;font-size:12px;color:#f1f1f1;letter-spacing:0.311px">App.config</div>
<svg style="left:61px;top:240px" width="6" height="10" viewBox="0 0 6 10"><path d="M0.7 0.8 L5.2 5 L0.7 9.2 Z" fill="none" stroke="#e0e0e0" stroke-width="1.3"/></svg>
<svg style="left:80.5px;top:238.5px" width="15" height="13" viewBox="0 0 15 13"><rect x="0.6" y="0.6" width="13.3" height="11.8" fill="#1e1e1e" stroke="#cfcfcf" stroke-width="1.2"/><rect x="0.6" y="0.6" width="13.3" height="2.6" fill="#cfcfcf"/><rect x="2.8" y="5.2" width="2" height="1" fill="#cfcfcf"/><rect x="6" y="4.5" width="5.8" height="2" fill="#cfcfcf"/><rect x="2.8" y="8.3" width="2" height="1" fill="#cfcfcf"/><rect x="6" y="7.8" width="5.8" height="2" fill="#cfcfcf"/></svg>
<div class="t" style="left:101.4px;top:238.74px;font-size:12px;color:#f1f1f1;letter-spacing:0.070px">billForm.cs</div>
<svg style="left:61px;top:258px" width="6" height="10" viewBox="0 0 6 10"><path d="M0.7 0.8 L5.2 5 L0.7 9.2 Z" fill="none" stroke="#e0e0e0" stroke-width="1.3"/></svg>
<svg style="left:80.5px;top:256.5px" width="15" height="13" viewBox="0 0 15 13"><rect x="0.6" y="0.6" width="13.3" height="11.8" fill="#1e1e1e" stroke="#cfcfcf" stroke-width="1.2"/><rect x="0.6" y="0.6" width="13.3" height="2.6" fill="#cfcfcf"/><rect x="2.8" y="5.2" width="2" height="1" fill="#cfcfcf"/><rect x="6" y="4.5" width="5.8" height="2" fill="#cfcfcf"/><rect x="2.8" y="8.3" width="2" height="1" fill="#cfcfcf"/><rect x="6" y="7.8" width="5.8" height="2" fill="#cfcfcf"/></svg>
<div class="t" style="left:101.4px;top:256.74px;font-size:12px;color:#f1f1f1;letter-spacing:-0.350px">ChangePassForm.cs</div>
<svg style="left:61px;top:276px" width="6" height="10" viewBox="0 0 6 10"><path d="M0.7 0.8 L5.2 5 L0.7 9.2 Z" fill="none" stroke="#e0e0e0" stroke-width="1.3"/></svg>
<svg style="left:80.5px;top:274.5px" width="15" height="13" viewBox="0 0 15 13"><rect x="0.6" y="0.6" width="13.3" height="11.8" fill="#1e1e1e" stroke="#cfcfcf" stroke-width="1.2"/><rect x="0.6" y="0.6" width="13.3" height="2.6" fill="#cfcfcf"/><rect x="2.8" y="5.2" width="2" height="1" fill="#cfcfcf"/><rect x="6" y="4.5" width="5.8" height="2" fill="#cfcfcf"/><rect x="2.8" y="8.3" width="2" height="1" fill="#cfcfcf"/><rect x="6" y="7.8" width="5.8" height="2" fill="#cfcfcf"/></svg>
<div class="t" style="left:101.4px;top:274.74px;font-size:12px;color:#f1f1f1;letter-spacing:-0.052px">ChiTietDatPhongForm.cs</div>
<svg style="left:61px;top:294px" width="6" height="10" viewBox="0 0 6 10"><path d="M0.7 0.8 L5.2 5 L0.7 9.2 Z" fill="none" stroke="#e0e0e0" stroke-width="1.3"/></svg>
<svg style="left:80.5px;top:292.5px" width="15" height="13" viewBox="0 0 15 13"><rect x="0.6" y="0.6" width="13.3" height="11.8" fill="#1e1e1e" stroke="#cfcfcf" stroke-width="1.2"/><rect x="0.6" y="0.6" width="13.3" height="2.6" fill="#cfcfcf"/><rect x="2.8" y="5.2" width="2" height="1" fill="#cfcfcf"/><rect x="6" y="4.5" width="5.8" height="2" fill="#cfcfcf"/><rect x="2.8" y="8.3" width="2" height="1" fill="#cfcfcf"/><rect x="6" y="7.8" width="5.8" height="2" fill="#cfcfcf"/></svg>
<div class="t" style="left:101.4px;top:292.74px;font-size:12px;color:#f1f1f1;letter-spacing:-0.100px">CustomersForm.cs</div>
<svg style="left:60.5px;top:313.5px" width="7" height="7" viewBox="0 0 7 7"><path d="M7 0 V7 H0 Z" fill="#e8e8e8"/></svg>
<svg style="left:80.5px;top:310.5px" width="15" height="13" viewBox="0 0 15 13"><rect x="0.6" y="0.6" width="13.3" height="11.8" fill="#1e1e1e" stroke="#cfcfcf" stroke-width="1.2"/><rect x="0.6" y="0.6" width="13.3" height="2.6" fill="#cfcfcf"/><rect x="2.8" y="5.2" width="2" height="1" fill="#cfcfcf"/><rect x="6" y="4.5" width="5.8" height="2" fill="#cfcfcf"/><rect x="2.8" y="8.3" width="2" height="1" fill="#cfcfcf"/><rect x="6" y="7.8" width="5.8" height="2" fill="#cfcfcf"/></svg>
<div class="t" style="left:101.4px;top:310.74px;font-size:12px;color:#f1f1f1;letter-spacing:-0.100px">DatPhongForm.cs</div>
<svg style="left:79px;top:330px" width="6" height="10" viewBox="0 0 6 10"><path d="M0.7 0.8 L5.2 5 L0.7 9.2 Z" fill="none" stroke="#e0e0e0" stroke-width="1.3"/></svg>
<svg style="left:99px;top:327px" width="13" height="14" viewBox="0 0 13 14"><path d="M2.5 4 V13.5 H11.5 V4.5 L8.5 1.5 H6" fill="none" stroke="#c8c8c8" stroke-width="1"/><path d="M8.5 1.5 V4.5 H11.5" fill="none" stroke="#c8c8c8"/><path d="M0 3 H5 M3 0.8 L5.3 3 L3 5.2" fill="none" stroke="#75beff" stroke-width="1.4"/></svg>
<div class="t" style="left:119.4px;top:328.74px;font-size:12px;color:#f1f1f1;letter-spacing:-0.100px">DatPhongForm.Designer.cs</div>
<svg style="left:99px;top:345px" width="13" height="14" viewBox="0 0 13 14"><path d="M2.5 4 V13.5 H11.5 V4.5 L8.5 1.5 H6" fill="none" stroke="#c8c8c8" stroke-width="1"/><path d="M8.5 1.5 V4.5 H11.5" fill="none" stroke="#c8c8c8"/><path d="M0 3 H5 M3 0.8 L5.3 3 L3 5.2" fill="none" stroke="#75beff" stroke-width="1.4"/></svg>
<div class="t" style="left:119.4px;top:346.74px;font-size:12px;color:#f1f1f1;letter-spacing:-0.138px">DatPhongForm.resx</div>
<svg style="left:61px;top:366px" width="6" height="10" viewBox="0 0 6 10"><path d="M0.7 0.8 L5.2 5 L0.7 9.2 Z" fill="none" stroke="#e0e0e0" stroke-width="1.3"/></svg>
<svg style="left:81px;top:363px" width="14" height="14" viewBox="0 0 14 14"><rect x="7" y="0.5" width="6" height="7.5" rx="1.5" fill="#c8c8c8"/><ellipse cx="10" cy="1.5" rx="3" ry="1" fill="#252526"/><path d="M1 8.5 H6 M3.5 6 V11 M1 8.5 L3 6.5 M1 8.5 L3 10.5 M3.5 11 L5.5 13 M8 6 L5 8.5" stroke="#c8c8c8" stroke-width="1.3"/></svg>
<div class="t" style="left:101.4px;top:364.74px;font-size:12px;color:#f1f1f1;letter-spacing:0.191px">dbModel.edmx</div>
<svg style="left:61px;top:384px" width="6" height="10" viewBox="0 0 6 10"><path d="M0.7 0.8 L5.2 5 L0.7 9.2 Z" fill="none" stroke="#e0e0e0" stroke-width="1.3"/></svg>
<svg style="left:80.5px;top:382.5px" width="15" height="13" viewBox="0 0 15 13"><rect x="0.6" y="0.6" width="13.3" height="11.8" fill="#1e1e1e" stroke="#cfcfcf" stroke-width="1.2"/><rect x="0.6" y="0.6" width="13.3" height="2.6" fill="#cfcfcf"/><rect x="2.8" y="5.2" width="2" height="1" fill="#cfcfcf"/><rect x="6" y="4.5" width="5.8" height="2" fill="#cfcfcf"/><rect x="2.8" y="8.3" width="2" height="1" fill="#cfcfcf"/><rect x="6" y="7.8" width="5.8" height="2" fill="#cfcfcf"/></svg>
<div class="t" style="left:101.4px;top:382.74px;font-size:12px;color:#f1f1f1;letter-spacing:-0.100px">DoanhThuForm.cs</div>
<svg style="left:61px;top:402px" width="6" height="10" viewBox="0 0 6 10"><path d="M0.7 0.8 L5.2 5 L0.7 9.2 Z" fill="none" stroke="#e0e0e0" stroke-width="1.3"/></svg>
<svg style="left:80.5px;top:400.5px" width="15" height="13" viewBox="0 0 15 13"><rect x="0.6" y="0.6" width="13.3" height="11.8" fill="#1e1e1e" stroke="#cfcfcf" stroke-width="1.2"/><rect x="0.6" y="0.6" width="13.3" height="2.6" fill="#cfcfcf"/><rect x="2.8" y="5.2" width="2" height="1" fill="#cfcfcf"/><rect x="6" y="4.5" width="5.8" height="2" fill="#cfcfcf"/><rect x="2.8" y="8.3" width="2" height="1" fill="#cfcfcf"/><rect x="6" y="7.8" width="5.8" height="2" fill="#cfcfcf"/></svg>
<div class="t" style="left:101.4px;top:400.74px;font-size:12px;color:#f1f1f1;letter-spacing:-0.167px">EmployeesForm.cs</div>
<svg style="left:61px;top:420px" width="6" height="10" viewBox="0 0 6 10"><path d="M0.7 0.8 L5.2 5 L0.7 9.2 Z" fill="none" stroke="#e0e0e0" stroke-width="1.3"/></svg>
<svg style="left:80.5px;top:418.5px" width="15" height="13" viewBox="0 0 15 13"><rect x="0.6" y="0.6" width="13.3" height="11.8" fill="#1e1e1e" stroke="#cfcfcf" stroke-width="1.2"/><rect x="0.6" y="0.6" width="13.3" height="2.6" fill="#cfcfcf"/><rect x="2.8" y="5.2" width="2" height="1" fill="#cfcfcf"/><rect x="6" y="4.5" width="5.8" height="2" fill="#cfcfcf"/><rect x="2.8" y="8.3" width="2" height="1" fill="#cfcfcf"/><rect x="6" y="7.8" width="5.8" height="2" fill="#cfcfcf"/></svg>
<div class="t" style="left:101.4px;top:418.74px;font-size:12px;color:#f1f1f1;letter-spacing:0.200px">Huyphong.cs</div>
<svg style="left:61px;top:438px" width="6" height="10" viewBox="0 0 6 10"><path d="M0.7 0.8 L5.2 5 L0.7 9.2 Z" fill="none" stroke="#e0e0e0" stroke-width="1.3"/></svg>
<svg style="left:80.5px;top:436.5px" width="15" height="13" viewBox="0 0 15 13"><rect x="0.6" y="0.6" width="13.3" height="11.8" fill="#1e1e1e" stroke="#cfcfcf" stroke-width="1.2"/><rect x="0.6" y="0.6" width="13.3" height="2.6" fill="#cfcfcf"/><rect x="2.8" y="5.2" width="2" height="1" fill="#cfcfcf"/><rect x="6" y="4.5" width="5.8" height="2" fill="#cfcfcf"/><rect x="2.8" y="8.3" width="2" height="1" fill="#cfcfcf"/><rect x="6" y="7.8" width="5.8" height="2" fill="#cfcfcf"/></svg>
<div class="t" style="left:101.4px;top:436.74px;font-size:12px;color:#f1f1f1;letter-spacing:0.043px">listCustomer.cs</div>
<svg style="left:61px;top:456px" width="6" height="10" viewBox="0 0 6 10"><path d="M0.7 0.8 L5.2 5 L0.7 9.2 Z" fill="none" stroke="#e0e0e0" stroke-width="1.3"/></svg>
<svg style="left:80.5px;top:454.5px" width="15" height="13" viewBox="0 0 15 13"><rect x="0.6" y="0.6" width="13.3" height="11.8" fill="#1e1e1e" stroke="#cfcfcf" stroke-width="1.2"/><rect x="0.6" y="0.6" width="13.3" height="2.6" fill="#cfcfcf"/><rect x="2.8" y="5.2" width="2" height="1" fill="#cfcfcf"/><rect x="6" y="4.5" width="5.8" height="2" fill="#cfcfcf"/><rect x="2.8" y="8.3" width="2" height="1" fill="#cfcfcf"/><rect x="6" y="7.8" width="5.8" height="2" fill="#cfcfcf"/></svg>
<div class="t" style="left:101.4px;top:454.74px;font-size:12px;color:#f1f1f1;letter-spacing:-0.100px">LoaiDichVuForm.cs</div>
<svg style="left:61px;top:474px" width="6" height="10" viewBox="0 0 6 10"><path d="M0.7 0.8 L5.2 5 L0.7 9.2 Z" fill="none" stroke="#e0e0e0" stroke-width="1.3"/></svg>
<svg style="left:80.5px;top:472.5px" width="15" height="13" viewBox="0 0 15 13"><rect x="0.6" y="0.6" width="13.3" height="11.8" fill="#1e1e1e" stroke="#cfcfcf" stroke-width="1.2"/><rect x="0.6" y="0.6" width="13.3" height="2.6" fill="#cfcfcf"/><rect x="2.8" y="5.2" width="2" height="1" fill="#cfcfcf"/><rect x="6" y="4.5" width="5.8" height="2" fill="#cfcfcf"/><rect x="2.8" y="8.3" width="2" height="1" fill="#cfcfcf"/><rect x="6" y="7.8" width="5.8" height="2" fill="#cfcfcf"/></svg>
<div class="t" style="left:101.4px;top:472.74px;font-size:12px;color:#f1f1f1;letter-spacing:-0.100px">LoaiPhongForm.cs</div>
<svg style="left:61px;top:492px" width="6" height="10" viewBox="0 0 6 10"><path d="M0.7 0.8 L5.2 5 L0.7 9.2 Z" fill="none" stroke="#e0e0e0" stroke-width="1.3"/></svg>
<svg style="left:80.5px;top:490.5px" width="15" height="13" viewBox="0 0 15 13"><rect x="0.6" y="0.6" width="13.3" height="11.8" fill="#1e1e1e" stroke="#cfcfcf" stroke-width="1.2"/><rect x="0.6" y="0.6" width="13.3" height="2.6" fill="#cfcfcf"/><rect x="2.8" y="5.2" width="2" height="1" fill="#cfcfcf"/><rect x="6" y="4.5" width="5.8" height="2" fill="#cfcfcf"/><rect x="2.8" y="8.3" width="2" height="1" fill="#cfcfcf"/><rect x="6" y="7.8" width="5.8" height="2" fill="#cfcfcf"/></svg>
<div class="t" style="left:101.4px;top:490.74px;font-size:12px;color:#f1f1f1;letter-spacing:-0.009px">LoginForm.cs</div>
<div class="a" style="left:32px;top:505px;width:250px;height:18px;background:#3f3f46;"></div>
<svg style="left:61px;top:510px" width="6" height="10" viewBox="0 0 6 10"><path d="M0.7 0.8 L5.2 5 L0.7 9.2 Z" fill="none" stroke="#e0e0e0" stroke-width="1.3"/></svg>
<svg style="left:80.5px;top:508.5px" width="15" height="13" viewBox="0 0 15 13"><rect x="0.6" y="0.6" width="13.3" height="11.8" fill="#1e1e1e" stroke="#cfcfcf" stroke-width="1.2"/><rect x="0.6" y="0.6" width="13.3" height="2.6" fill="#cfcfcf"/><rect x="2.8" y="5.2" width="2" height="1" fill="#cfcfcf"/><rect x="6" y="4.5" width="5.8" height="2" fill="#cfcfcf"/><rect x="2.8" y="8.3" width="2" height="1" fill="#cfcfcf"/><rect x="6" y="7.8" width="5.8" height="2" fill="#cfcfcf"/></svg>
<div class="t" style="left:101.4px;top:508.74px;font-size:12px;color:#f1f1f1;letter-spacing:0.000px">MainForm.cs</div>
<svg style="left:61px;top:528px" width="6" height="10" viewBox="0 0 6 10"><path d="M0.7 0.8 L5.2 5 L0.7 9.2 Z" fill="none" stroke="#e0e0e0" stroke-width="1.3"/></svg>
<svg style="left:80.5px;top:526.5px" width="15" height="13" viewBox="0 0 15 13"><rect x="0.6" y="0.6" width="13.3" height="11.8" fill="#1e1e1e" stroke="#cfcfcf" stroke-width="1.2"/><rect x="0.6" y="0.6" width="13.3" height="2.6" fill="#cfcfcf"/><rect x="2.8" y="5.2" width="2" height="1" fill="#cfcfcf"/><rect x="6" y="4.5" width="5.8" height="2" fill="#cfcfcf"/><rect x="2.8" y="8.3" width="2" height="1" fill="#cfcfcf"/><rect x="6" y="7.8" width="5.8" height="2" fill="#cfcfcf"/></svg>
<div class="t" style="left:101.4px;top:526.74px;font-size:12px;color:#f1f1f1;letter-spacing:0.033px">NhanPhongForm.cs</div>
<svg style="left:61px;top:546px" width="6" height="10" viewBox="0 0 6 10"><path d="M0.7 0.8 L5.2 5 L0.7 9.2 Z" fill="none" stroke="#e0e0e0" stroke-width="1.3"/></svg>
<svg style="left:82px;top:546px" width="13" height="9" viewBox="0 0 13 9"><path d="M6.6 2.2 A3 3.1 0 1 0 6.6 6.8" fill="none" stroke="#6db56d" stroke-width="2"/><path d="M8.8 0.3 V5.3 M11 0.3 V5.3 M7.6 1.8 H12.4 M7.6 3.8 H12.4" stroke="#6db56d" stroke-width="1.1"/></svg>
<div class="t" style="left:101.4px;top:544.74px;font-size:12px;color:#f1f1f1;letter-spacing:-0.100px">Program.cs</div>
<svg style="left:61px;top:564px" width="6" height="10" viewBox="0 0 6 10"><path d="M0.7 0.8 L5.2 5 L0.7 9.2 Z" fill="none" stroke="#e0e0e0" stroke-width="1.3"/></svg>
<svg style="left:80.5px;top:562.5px" width="15" height="13" viewBox="0 0 15 13"><rect x="0.6" y="0.6" width="13.3" height="11.8" fill="#1e1e1e" stroke="#cfcfcf" stroke-width="1.2"/><rect x="0.6" y="0.6" width="13.3" height="2.6" fill="#cfcfcf"/><rect x="2.8" y="5.2" width="2" height="1" fill="#cfcfcf"/><rect x="6" y="4.5" width="5.8" height="2" fill="#cfcfcf"/><rect x="2.8" y="8.3" width="2" height="1" fill="#cfcfcf"/><rect x="6" y="7.8" width="5.8" height="2" fill="#cfcfcf"/></svg>
<div class="t" style="left:101.4px;top:562.74px;font-size:12px;color:#f1f1f1;letter-spacing:-0.300px">QLServiceForm.cs</div>
<svg style="left:61px;top:582px" width="6" height="10" viewBox="0 0 6 10"><path d="M0.7 0.8 L5.2 5 L0.7 9.2 Z" fill="none" stroke="#e0e0e0" stroke-width="1.3"/></svg>
<svg style="left:80.5px;top:580.5px" width="15" height="13" viewBox="0 0 15 13"><rect x="0.6" y="0.6" width="13.3" height="11.8" fill="#1e1e1e" stroke="#cfcfcf" stroke-width="1.2"/><rect x="0.6" y="0.6" width="13.3" height="2.6" fill="#cfcfcf"/><rect x="2.8" y="5.2" width="2" height="1" fill="#cfcfcf"/><rect x="6" y="4.5" width="5.8" height="2" fill="#cfcfcf"/><rect x="2.8" y="8.3" width="2" height="1" fill="#cfcfcf"/><rect x="6" y="7.8" width="5.8" height="2" fill="#cfcfcf"/></svg>
<div class="t" style="left:101.4px;top:580.74px;font-size:12px;color:#f1f1f1;letter-spacing:0.000px">QlyPhong.cs</div>
<svg style="left:61px;top:600px" width="6" height="10" viewBox="0 0 6 10"><path d="M0.7 0.8 L5.2 5 L0.7 9.2 Z" fill="none" stroke="#e0e0e0" stroke-width="1.3"/></svg>
<svg style="left:80.5px;top:598.5px" width="15" height="13" viewBox="0 0 15 13"><rect x="0.6" y="0.6" width="13.3" height="11.8" fill="#1e1e1e" stroke="#cfcfcf" stroke-width="1.2"/><rect x="0.6" y="0.6" width="13.3" height="2.6" fill="#cfcfcf"/><rect x="2.8" y="5.2" width="2" height="1" fill="#cfcfcf"/><rect x="6" y="4.5" width="5.8" height="2" fill="#cfcfcf"/><rect x="2.8" y="8.3" width="2" height="1" fill="#cfcfcf"/><rect x="6" y="7.8" width="5.8" height="2" fill="#cfcfcf"/></svg>
<div class="t" style="left:101.4px;top:598.74px;font-size:12px;color:#f1f1f1;letter-spacing:-0.218px">ServiceRoomForm.cs</div>
<svg style="left:61px;top:618px" width="6" height="10" viewBox="0 0 6 10"><path d="M0.7 0.8 L5.2 5 L0.7 9.2 Z" fill="none" stroke="#e0e0e0" stroke-width="1.3"/></svg>
<svg style="left:80.5px;top:616.5px" width="15" height="13" viewBox="0 0 15 13"><rect x="0.6" y="0.6" width="13.3" height="11.8" fill="#1e1e1e" stroke="#cfcfcf" stroke-width="1.2"/><rect x="0.6" y="0.6" width="13.3" height="2.6" fill="#cfcfcf"/><rect x="2.8" y="5.2" width="2" height="1" fill="#cfcfcf"/><rect x="6" y="4.5" width="5.8" height="2" fill="#cfcfcf"/><rect x="2.8" y="8.3" width="2" height="1" fill="#cfcfcf"/><rect x="6" y="7.8" width="5.8" height="2" fill="#cfcfcf"/></svg>
<div class="t" style="left:101.4px;top:616.74px;font-size:12px;color:#f1f1f1;letter-spacing:-0.300px">TraPhong.cs</div>
<svg style="left:61px;top:636px" width="6" height="10" viewBox="0 0 6 10"><path d="M0.7 0.8 L5.2 5 L0.7 9.2 Z" fill="none" stroke="#e0e0e0" stroke-width="1.3"/></svg>
<svg style="left:80.5px;top:634.5px" width="15" height="13" viewBox="0 0 15 13"><rect x="0.6" y="0.6" width="13.3" height="11.8" fill="#1e1e1e" stroke="#cfcfcf" stroke-width="1.2"/><rect x="0.6" y="0.6" width="13.3" height="2.6" fill="#cfcfcf"/><rect x="2.8" y="5.2" width="2" height="1" fill="#cfcfcf"/><rect x="6" y="4.5" width="5.8" height="2" fill="#cfcfcf"/><rect x="2.8" y="8.3" width="2" height="1" fill="#cfcfcf"/><rect x="6" y="7.8" width="5.8" height="2" fill="#cfcfcf"/></svg>
<div class="t" style="left:101.4px;top:634.74px;font-size:12px;color:#f1f1f1;letter-spacing:-0.373px">UsersForm.cs</div>
<div class="a" style="left:31px;top:717px;width:102px;height:21px;background:#252526;border:1px solid #3f3f46;border-top:none"></div>
<div class="t" style="left:36.3px;top:721.04px;font-size:12px;color:#0097fb;">Solution Explorer</div>
<div class="t" style="left:139.3px;top:721.04px;font-size:12px;color:#f1f1f1;letter-spacing:-0.3px">Properties</div>
<div class="t" style="left:204px;top:721.04px;font-size:12px;color:#f1f1f1;">Toolbox</div>
<div class="a" style="left:289px;top:72px;width:1046px;height:532px;background:#2d2d30;"></div>
<div class="a" style="left:289px;top:91px;width:1046px;height:513px;background:#2d2d30;border:1px solid #3f3f46;border-top:none"></div>
<div class="t" style="left:295px;top:76.14px;font-size:12px;color:#f1f1f1;">DatPhongForm.cs</div>
<div class="a" style="left:434px;top:72px;width:133px;height:19px;background:#007acc;"></div>
<div class="t" style="left:438.3px;top:76.14px;font-size:12px;color:#ffffff;">listCustomer.cs*</div>
<svg style="left:534px;top:79px" width="11" height="9" viewBox="0 0 11 9"><path d="M0 4.5 H3.5 M3.5 1 V8 M3.5 1.5 H10 M3.5 7.5 H10 M10 1.5 V7.5 M3.5 5.5 H10" fill="none" stroke="#ffffff" stroke-width="1.1"/></svg>
<svg style="left:552px;top:79px" width="9" height="9" viewBox="0 0 9 9"><path d="M0.5 0.5 L8.5 8.5 M8.5 0.5 L0.5 8.5" stroke="#ffffff" stroke-width="1.4"/></svg>
<div class="t" style="left:572px;top:76.14px;font-size:12px;color:#f1f1f1;letter-spacing:-0.08px">DatPhongForm.cs [Design]</div>
<div class="t" style="left:763.3px;top:76.14px;font-size:12px;color:#f1f1f1;">listCustomer.cs [Design]*</div>
<svg style="left:1306px;top:81px" width="8" height="5" viewBox="0 0 8 5"><path d="M0 0 H8 L4 4.5 Z" fill="#f1f1f1"/></svg>
<svg style="left:1322px;top:75px" width="12" height="12" viewBox="0 0 12 12"><g fill="#f1f1f1"><circle cx="6" cy="6" r="3.8"/><rect x="5" y="0" width="2" height="3" transform="rotate(0 6 6)"/><rect x="5" y="0" width="2" height="3" transform="rotate(45 6 6)"/><rect x="5" y="0" width="2" height="3" transform="rotate(90 6 6)"/><rect x="5" y="0" width="2" height="3" transform="rotate(135 6 6)"/><rect x="5" y="0" width="2" height="3" transform="rotate(180 6 6)"/><rect x="5" y="0" width="2" height="3" transform="rotate(225 6 6)"/><rect x="5" y="0" width="2" height="3" transform="rotate(270 6 6)"/><rect x="5" y="0" width="2" height="3" transform="rotate(315 6 6)"/></g><circle cx="6" cy="6" r="1.6" fill="#2d2d30"/></svg>
<div class="a" style="left:290px;top:91px;width:1044px;height:2px;background:#007acc;"></div>
<div class="a" style="left:290px;top:93px;width:346px;height:21px;background:#333337;border:1px solid #3f3f46;border-top:none"></div>
<div class="a" style="left:639px;top:93px;width:346px;height:21px;background:#333337;border:1px solid #3f3f46;border-top:none"></div>
<div class="a" style="left:988px;top:93px;width:346px;height:21px;background:#333337;border:1px solid #3f3f46;border-top:none"></div>
<svg style="left:294px;top:97px" width="14" height="12" viewBox="0 0 14 12"><rect x="0.5" y="0.5" width="13" height="11" fill="none" stroke="#6db56d"/><path d="M6.3 3.3 A2.6 2.8 0 1 0 6.3 8.7" fill="none" stroke="#cfcfcf" stroke-width="1.1"/><path d="M8.3 3 L8 8.5 M10.5 3 L10.2 8.5 M7.2 4.6 H11.6 M7 7 H11.4" stroke="#cfcfcf" stroke-width="0.9"/></svg>
<div class="t" style="left:311.3px;top:97.84px;font-size:12px;color:#f1f1f1;">Hotel-SoftWare2</div>
<svg style="left:627px;top:103px" width="6" height="3.5" viewBox="0 0 6 3.5"><path d="M0 0 H6 L3.0 3.5 Z" fill="#999999"/></svg>
<svg style="left:643px;top:96px" width="15" height="15" viewBox="0 0 15 15"><g fill="#f3c98b"><rect x="1" y="2" width="5" height="5" transform="rotate(45 3.5 4.5)"/><rect x="8" y="6" width="4" height="4" transform="rotate(45 10 8)"/><rect x="8" y="10.5" width="4" height="4" transform="rotate(45 10 12.5)"/></g><path d="M5 6 V12 H8 M5 8.5 H8" fill="none" stroke="#f3c98b"/></svg>
<div class="t" style="left:659.6px;top:97.84px;font-size:12px;color:#f1f1f1;letter-spacing:-0.15px">Hotel_SoftWare2.listCustomer</div>
<svg style="left:975.5px;top:103px" width="6" height="3.5" viewBox="0 0 6 3.5"><path d="M0 0 H6 L3.0 3.5 Z" fill="#999999"/></svg>
<svg style="left:992px;top:96px" width="15" height="15" viewBox="0 0 15 15"><path d="M6 0.8 L11 3.3 V9 L6 11.5 L1 9 V3.3 Z M1 3.3 L6 5.8 L11 3.3 M6 5.8 V11.5" fill="none" stroke="#b180d7" stroke-width="1.2"/><rect x="9.5" y="10" width="5" height="4.5" fill="#f1f1f1"/><rect x="10.8" y="8" width="2.4" height="3" fill="none" stroke="#f1f1f1"/></svg>
<div class="t" style="left:1009.3px;top:97.84px;font-size:12px;color:#f1f1f1;letter-spacing:-0.15px">listCustomer_FormClosed(object sender, FormClosedEvent</div>
<svg style="left:1325px;top:103px" width="6" height="3.5" viewBox="0 0 6 3.5"><path d="M0 0 H6 L3.0 3.5 Z" fill="#999999"/></svg>
<div class="a" style="left:290px;top:115px;width:17px;height:471px;background:#333333;"></div>
<div class="a" style="left:307px;top:115px;width:1004px;height:471px;background:#1e1e1e;"></div>
<div class="a" style="left:1311px;top:114px;width:24px;height:472px;background:#3e3e42;"></div>
<div class="a" style="left:1312px;top:115px;width:21px;height:16px;background:#1e1e1e;"></div>
<svg style="left:1316px;top:116px" width="13" height="14" viewBox="0 0 13 14"><path d="M0 5.5 H13 M0 8.5 H13" stroke="#f1f1f1" stroke-width="1"/><path d="M6.5 1 V4.5 M6.5 9.5 V13" stroke="#f1f1f1" stroke-width="1"/><path d="M4.5 3 L6.5 1 L8.5 3 M4.5 11 L6.5 13 L8.5 11" fill="none" stroke="#f1f1f1" stroke-width="1"/></svg>
<svg style="left:1318px;top:138px" width="10" height="5" viewBox="0 0 10 5"><path d="M0 5 H10 L5 0 Z" fill="#999"/></svg>
<svg style="left:1318px;top:575px" width="10" height="5" viewBox="0 0 10 5"><path d="M0 0 H10 L5 5 Z" fill="#999"/></svg>
<div class="a" style="left:1315px;top:319px;width:15px;height:131px;background:#686868;"></div>
<div class="a" style="left:1329px;top:212px;width:5px;height:5px;background:#b8b8b8;"></div>
<div class="a" style="left:1329px;top:228px;width:5px;height:5px;background:#b8b8b8;"></div>
<div class="a" style="left:1329px;top:258px;width:5px;height:5px;background:#b8b8b8;"></div>
<div class="a" style="left:1329px;top:284px;width:5px;height:5px;background:#b8b8b8;"></div>
<div class="a" style="left:1329px;top:319px;width:5px;height:5px;background:#b8b8b8;"></div>
<div class="a" style="left:1329px;top:345px;width:5px;height:5px;background:#b8b8b8;"></div>
<div class="a" style="left:1329px;top:355px;width:5px;height:5px;background:#b8b8b8;"></div>
<div class="a" style="left:1329px;top:386px;width:5px;height:5px;background:#b8b8b8;"></div>
<div class="a" style="left:1311px;top:215px;width:4px;height:14px;background:#587c2e;"></div>
<div class="a" style="left:1311px;top:364px;width:4px;height:55px;background:#587c2e;"></div>
<div class="a" style="left:1311px;top:389px;width:4px;height:20px;background:#eeee88;"></div>
<div class="a" style="left:1311px;top:403px;width:22px;height:2px;background:#e8e8e8;"></div>
<div class="a" style="left:378px;top:435px;width:931px;height:17px;background:transparent;border:1px solid #464646"></div>
<div class="a" style="left:362px;top:306px;width:5px;height:17px;background:#587c2e;"></div>
<div class="a" style="left:362px;top:340px;width:5px;height:145px;background:#587c2e;"></div>
<div class="a" style="left:362px;top:402px;width:5px;height:17px;background:#eeee88;"></div>
<div class="a" style="left:362px;top:435px;width:5px;height:17px;background:#eeee88;"></div>
<div class="a" style="left:373px;top:115px;width:1px;height:386px;background:#a5a5a5;"></div>
<div class="a" style="left:373px;top:208px;width:6px;height:1px;background:#a5a5a5;"></div>
<div class="a" style="left:373px;top:354px;width:6px;height:1px;background:#a5a5a5;"></div>
<div class="a" style="left:373px;top:467px;width:6px;height:1px;background:#a5a5a5;"></div>
<div class="a" style="left:373px;top:483px;width:6px;height:1px;background:#a5a5a5;"></div>
<div class="a" style="left:373px;top:500px;width:6px;height:1px;background:#a5a5a5;"></div>
<svg style="left:369px;top:147px" width="9" height="9" viewBox="0 0 9 9"><rect x="0.5" y="0.5" width="8" height="8" fill="#1e1e1e" stroke="#a5a5a5"/><path d="M2 4.5 H7" stroke="#e0e0e0" stroke-width="1.2"/></svg>
<svg style="left:369px;top:243px" width="9" height="9" viewBox="0 0 9 9"><rect x="0.5" y="0.5" width="8" height="8" fill="#1e1e1e" stroke="#a5a5a5"/><path d="M2 4.5 H7" stroke="#e0e0e0" stroke-width="1.2"/></svg>
<svg style="left:369px;top:389px" width="9" height="9" viewBox="0 0 9 9"><rect x="0.5" y="0.5" width="8" height="8" fill="#1e1e1e" stroke="#a5a5a5"/><path d="M2 4.5 H7" stroke="#e0e0e0" stroke-width="1.2"/></svg>
<div class="a" style="left:381px;top:115px;width:1px;height:370px;background:repeating-linear-gradient(to bottom,#6e6e6e 0 3px,transparent 3px 5px)"></div>
<div class="a" style="left:410px;top:115px;width:1px;height:354px;background:repeating-linear-gradient(to bottom,#6e6e6e 0 3px,transparent 3px 5px)"></div>
<div class="a" style="left:438px;top:177px;width:1px;height:17px;background:repeating-linear-gradient(to bottom,#6e6e6e 0 3px,transparent 3px 5px)"></div>
<div class="a" style="left:438px;top:273px;width:1px;height:67px;background:repeating-linear-gradient(to bottom,#6e6e6e 0 3px,transparent 3px 5px)"></div>
<div class="a" style="left:438px;top:419px;width:1px;height:33px;background:repeating-linear-gradient(to bottom,#6e6e6e 0 3px,transparent 3px 5px)"></div>
<div class="c" style="left:300px;width:42px;text-align:right;top:116.81px;color:#2b91af">34</div>
<div class="c" style="left:300px;width:42px;text-align:right;top:145.98px;color:#2b91af">35</div>
<div class="c" style="left:300px;width:42px;text-align:right;top:162.65px;color:#2b91af">36</div>
<div class="c" style="left:300px;width:42px;text-align:right;top:179.32px;color:#2b91af">37</div>
<div class="c" style="left:300px;width:42px;text-align:right;top:195.99px;color:#2b91af">38</div>
<div class="c" style="left:300px;width:42px;text-align:right;top:212.66px;color:#2b91af">39</div>
<div class="c" style="left:300px;width:42px;text-align:right;top:241.83px;color:#2b91af">40</div>
<div class="c" style="left:300px;width:42px;text-align:right;top:258.50px;color:#2b91af">41</div>
<div class="c" style="left:300px;width:42px;text-align:right;top:275.17px;color:#2b91af">42</div>
<div class="c" style="left:300px;width:42px;text-align:right;top:291.84px;color:#2b91af">43</div>
<div class="c" style="left:300px;width:42px;text-align:right;top:308.51px;color:#2b91af">44</div>
<div class="c" style="left:300px;width:42px;text-align:right;top:325.18px;color:#2b91af">45</div>
<div class="c" style="left:300px;width:42px;text-align:right;top:341.85px;color:#2b91af">46</div>
<div class="c" style="left:300px;width:42px;text-align:right;top:358.52px;color:#2b91af">47</div>
<div class="c" style="left:300px;width:42px;text-align:right;top:388.49px;color:#2b91af">48</div>
<div class="c" style="left:300px;width:42px;text-align:right;top:405.16px;color:#2b91af">49</div>
<div class="c" style="left:300px;width:42px;text-align:right;top:421.83px;color:#2b91af">50</div>
<div class="c" style="left:300px;width:42px;text-align:right;top:438.50px;color:#2b91af">51</div>
<div class="c" style="left:300px;width:42px;text-align:right;top:455.17px;color:#2b91af">52</div>
<div class="c" style="left:300px;width:42px;text-align:right;top:471.84px;color:#2b91af">53</div>
<div class="c" style="left:300px;width:42px;text-align:right;top:488.51px;color:#2b91af">54</div>
<div class="c" style="left:300px;width:42px;text-align:right;top:505.18px;color:#2b91af">55</div>
<div class="c" style="left:435px;top:143.67px"><span class="k">private void </span><span class="m">btnChon_Click</span>(<span class="k">object </span><span class="p">sender</span>, <span class="ty">EventArgs </span><span class="p">e</span>)</div>
<div class="c" style="left:435px;top:160.34px">{</div>
<div class="c" style="left:435px;top:193.68px">}</div>
<div class="c" style="left:435px;top:239.52px"><span class="k">public void </span><span class="m">dgvlistCus_CellDoubleClick</span>(<span class="k">object </span><span class="p">sender</span>, <span class="ty">DataGridViewCellEventArgs </span><span class="p">e</span>)</div>
<div class="c" style="left:435px;top:256.19px">{</div>
<div class="c" style="left:435px;top:272.86px">    <span class="ty">DataGridViewRow </span><span class="p">row</span> = <span class="k">new </span><span class="ty">DataGridViewRow</span>();</div>
<div class="c" style="left:435px;top:289.53px">    <span class="p">row</span> = dgvlistCus.Rows[<span class="p">e</span>.RowIndex];</div>
<div class="c" style="left:435px;top:306.20px">    maKH = <span class="p">row</span>.Cells[<span class="n">0</span>].Value.<span class="m">ToString</span>();</div>
<div class="c" style="left:435px;top:322.87px">    <span class="k">this</span>.<span class="m">Close</span>();</div>
<div class="c" style="left:435px;top:339.54px">}</div>
<div class="c" style="left:435px;top:386.18px"><span class="k">private void </span><span class="m">listCustomer_FormClosed</span>(<span class="k">object </span><span class="p">sender</span>, <span class="ty">FormClosedEventArgs </span><span class="p">e</span>)</div>
<div class="c" style="left:435px;top:402.85px">{</div>
<div class="c" style="left:435px;top:419.52px">    <span class="ty">MainForm </span><span class="p">m</span> = <span class="k">new </span><span class="ty">MainForm</span>();</div>
<div class="c" style="left:435px;top:436.19px">    <span class="p">m</span>.<span class="m">openChildForm</span>(<span class="k">new </span><span class="ty">DatPhongForm</span>());</div>
<div class="c" style="left:435px;top:452.86px">}</div>
<div class="c" style="left:407px;top:469.53px">}</div>
<div class="c" style="left:379px;top:486.20px">}</div>
<svg style="left:527px;top:156px" width="11" height="2" viewBox="0 0 11 2"><rect x="0" y="0" width="1.2" height="1.2" fill="#9a9a9a"/><rect x="4" y="0" width="1.2" height="1.2" fill="#9a9a9a"/><rect x="8" y="0" width="1.2" height="1.2" fill="#9a9a9a"/></svg>
<svg style="left:519px;top:252px" width="11" height="2" viewBox="0 0 11 2"><rect x="0" y="0" width="1.2" height="1.2" fill="#9a9a9a"/><rect x="4" y="0" width="1.2" height="1.2" fill="#9a9a9a"/><rect x="8" y="0" width="1.2" height="1.2" fill="#9a9a9a"/></svg>
<svg style="left:575px;top:286px" width="11" height="2" viewBox="0 0 11 2"><rect x="0" y="0" width="1.2" height="1.2" fill="#9a9a9a"/><rect x="4" y="0" width="1.2" height="1.2" fill="#9a9a9a"/><rect x="8" y="0" width="1.2" height="1.2" fill="#9a9a9a"/></svg>
<svg style="left:527px;top:399px" width="11" height="2" viewBox="0 0 11 2"><rect x="0" y="0" width="1.2" height="1.2" fill="#9a9a9a"/><rect x="4" y="0" width="1.2" height="1.2" fill="#9a9a9a"/><rect x="8" y="0" width="1.2" height="1.2" fill="#9a9a9a"/></svg>
<div class="t" style="left:434.5px;top:132.07px;font-size:9.6px;color:#999999;letter-spacing:0.06px">0 references <span style="color:#8a8a8a">|</span> 0 changes <span style="color:#8a8a8a">|</span> 0 authors, 0 changes</div>
<div class="t" style="left:434.5px;top:227.92px;font-size:9.6px;color:#999999;letter-spacing:0.06px">1 reference <span style="color:#8a8a8a">|</span> 0 changes <span style="color:#8a8a8a">|</span> 0 authors, 0 changes</div>
<div class="t" style="left:434.5px;top:374.58px;font-size:9.6px;color:#999999;letter-spacing:0.06px">1 reference <span style="color:#8a8a8a">|</span> 0 changes <span style="color:#8a8a8a">|</span> 0 authors, 0 changes</div>
<div class="a" style="left:290px;top:586px;width:1045px;height:17px;background:#333337;"></div>
<div class="a" style="left:290px;top:586px;width:60px;height:17px;background:#2d2d30;border-right:1px solid #3f3f46;border-bottom:1px solid #3f3f46"></div>
<div class="t" style="left:292px;top:589.69px;font-size:11px;color:#f1f1f1;letter-spacing:-0.3px">98 %</div>
<svg style="left:341px;top:594px" width="6" height="3.5" viewBox="0 0 6 3.5"><path d="M0 0 H6 L3 3.5 Z" fill="#f1f1f1"/></svg>
<svg style="left:374px;top:589px" width="12" height="12" viewBox="0 0 12 12"><circle cx="6" cy="6" r="5.5" fill="#1f9b3f" stroke="#d8d8d8" stroke-width="0.8"/><path d="M3 6.2 L5.2 8.3 L9 4" fill="none" stroke="#fff" stroke-width="1.5"/></svg>
<div class="t" style="left:390.3px;top:588.84px;font-size:12px;color:#f1f1f1;letter-spacing:-0.2px">No issues found</div>
<div class="a" style="left:532px;top:588px;width:1px;height:13px;background:#999;"></div>
<svg style="left:548px;top:588px" width="12" height="12" viewBox="0 0 12 12"><path d="M5 1 L11 7 L7.5 10.5 L1.5 4.5 Z" fill="none" stroke="#c8c8c8" stroke-width="1.2"/><path d="M8 0.5 L11.5 4" stroke="#c8c8c8" stroke-width="1.5"/></svg>
<svg style="left:563px;top:593px" width="7" height="4" viewBox="0 0 7 4"><path d="M0 0 H7 L3.5 4 Z" fill="#f1f1f1"/></svg>
<svg style="left:600px;top:591px" width="5" height="8" viewBox="0 0 5 8"><path d="M5 0 V8 L0 4 Z" fill="#555557"/></svg>
<svg style="left:1128px;top:591px" width="5" height="8" viewBox="0 0 5 8"><path d="M0 0 V8 L5 4 Z" fill="#555557"/></svg>
<div class="t" style="left:1161px;top:589.49px;font-size:11px;color:#f1f1f1;letter-spacing:-0.2px">Ln: 51</div>
<div class="t" style="left:1209.3px;top:589.49px;font-size:11px;color:#f1f1f1;letter-spacing:-0.2px">Ch: 49</div>
<div class="t" style="left:1260px;top:589.49px;font-size:11px;color:#f1f1f1;letter-spacing:-1.2px">SPC</div>
<div class="t" style="left:1299.5px;top:589.49px;font-size:11px;color:#f1f1f1;letter-spacing:-1.3px">CRLF</div>
<div class="t" style="left:1356px;top:72px;font-size:12px;color:#f1f1f1;transform-origin:0 0;transform:rotate(90deg);letter-spacing:-0.1px">Diagnostic Tools</div>
<div class="a" style="left:1360px;top:72px;width:6px;height:86px;background:#3f3f46;"></div>
<div class="a" style="left:289px;top:610px;width:1046px;height:108px;background:#2d2d30;border:1px solid #3f3f46"></div>
<div class="t" style="left:294.3px;top:615.54px;font-size:12px;color:#f1f1f1;">Output</div>
<svg style="left:340px;top:619px" width="940" height="6" viewBox="0 0 940 6"><rect x="0" y="0" width="1" height="1" fill="#5e5e62"/><rect x="1" y="2" width="1" height="1" fill="#5e5e62"/><rect x="0" y="4" width="1" height="1" fill="#5e5e62"/><rect x="2" y="0" width="1" height="1" fill="#5e5e62"/><rect x="3" y="2" width="1" height="1" fill="#5e5e62"/><rect x="2" y="4" width="1" height="1" fill="#5e5e62"/><rect x="4" y="0" width="1" height="1" fill="#5e5e62"/><rect x="5" y="2" width="1" height="1" fill="#5e5e62"/><rect x="4" y="4" width="1" height="1" fill="#5e5e62"/><rect x="6" y="0" width="1" height="1" fill="#5e5e62"/><rect x="7" y="2" width="1" height="1" fill="#5e5e62"/><rect x="6" y="4" width="1" height="1" fill="#5e5e62"/><rect x="8" y="0" width="1" height="1" fill="#5e5e62"/><rect x="9" y="2" width="1" height="1" fill="#5e5e62"/><rect x="8" y="4" width="1" height="1" fill="#5e5e62"/><rect x="10" y="0" width="1" height="1" fill="#5e5e62"/><rect x="11" y="2" width="1" height="1" fill="#5e5e62"/><rect x="10" y="4" width="1" height="1" fill="#5e5e62"/><rect x="12" y="0" width="1" height="1" fill="#5e5e62"/><rect x="13" y="2" width="1" height="1" fill="#5e5e62"/><rect x="12" y="4" width="1" height="1" fill="#5e5e62"/><rect x="14" y="0" width="1" height="1" fill="#5e5e62"/><rect x="15" y="2" width="1" height="1" fill="#5e5e62"/><rect x="14" y="4" width="1" height="1" fill="#5e5e62"/><rect x="16" y="0" width="1" height="1" fill="#5e5e62"/><rect x="17" y="2" width="1" height="1" fill="#5e5e62"/><rect x="16" y="4" width="1" height="1" fill="#5e5e62"/><rect x="18" y="0" width="1" height="1" fill="#5e5e62"/><rect x="19" y="2" width="1" height="1" fill="#5e5e62"/><rect x="18" y="4" width="1" height="1" fill="#5e5e62"/><rect x="20" y="0" width="1" height="1" fill="#5e5e62"/><rect x="21" y="2" width="1" height="1" fill="#5e5e62"/><rect x="20" y="4" width="1" height="1" fill="#5e5e62"/><rect x="22" y="0" width="1" height="1" fill="#5e5e62"/><rect x="23" y="2" width="1" height="1" fill="#5e5e62"/><rect x="22" y="4" width="1" height="1" fill="#5e5e62"/><rect x="24" y="0" width="1" height="1" fill="#5e5e62"/><rect x="25" y="2" width="1" height="1" fill="#5e5e62"/><rect x="24" y="4" width="1" height="1" fill="#5e5e62"/><rect x="26" y="0" width="1" height="1" fill="#5e5e62"/><rect x="27" y="2" width="1" height="1" fill="#5e5e62"/><rect x="26" y="4" width="1" height="1" fill="#5e5e62"/><rect x="28" y="0" width="1" height="1" fill="#5e5e62"/><rect x="29" y="2" width="1" height="1" fill="#5e5e62"/><rect x="28" y="4" width="1" height="1" fill="#5e5e62"/><rect x="30" y="0" width="1" height="1" fill="#5e5e62"/><rect x="31" y="2" width="1" height="1" fill="#5e5e62"/><rect x="30" y="4" width="1" height="1" fill="#5e5e62"/><rect x="32" y="0" width="1" height="1" fill="#5e5e62"/><rect x="33" y="2" width="1" height="1" fill="#5e5e62"/><rect x="32" y="4" width="1" height="1" fill="#5e5e62"/><rect x="34" y="0" width="1" height="1" fill="#5e5e62"/><rect x="35" y="2" width="1" height="1" fill="#5e5e62"/><rect x="34" y="4" width="1" height="1" fill="#5e5e62"/><rect x="36" y="0" width="1" height="1" fill="#5e5e62"/><rect x="37" y="2" width="1" height="1" fill="#5e5e62"/><rect x="36" y="4" width="1" height="1" fill="#5e5e62"/><rect x="38" y="0" width="1" height="1" fill="#5e5e62"/><rect x="39" y="2" width="1" height="1" fill="#5e5e62"/><rect x="38" y="4" width="1" height="1" fill="#5e5e62"/><rect x="40" y="0" width="1" height="1" fill="#5e5e62"/><rect x="41" y="2" width="1" height="1" fill="#5e5e62"/><rect x="40" y="4" width="1" height="1" fill="#5e5e62"/><rect x="42" y="0" width="1" height="1" fill="#5e5e62"/><rect x="43" y="2" width="1" height="1" fill="#5e5e62"/><rect x="42" y="4" width="1" height="1" fill="#5e5e62"/><rect x="44" y="0" width="1" height="1" fill="#5e5e62"/><rect x="45" y="2" width="1" height="1" fill="#5e5e62"/><rect x="44" y="4" width="1" height="1" fill="#5e5e62"/><rect x="46" y="0" width="1" height="1" fill="#5e5e62"/><rect x="47" y="2" width="1" height="1" fill="#5e5e62"/><rect x="46" y="4" width="1" height="1" fill="#5e5e62"/><rect x="48" y="0" width="1" height="1" fill="#5e5e62"/><rect x="49" y="2" width="1" height="1" fill="#5e5e62"/><rect x="48" y="4" width="1" height="1" fill="#5e5e62"/><rect x="50" y="0" width="1" height="1" fill="#5e5e62"/><rect x="51" y="2" width="1" height="1" fill="#5e5e62"/><rect x="50" y="4" width="1" height="1" fill="#5e5e62"/><rect x="52" y="0" width="1" height="1" fill="#5e5e62"/><rect x="53" y="2" width="1" height="1" fill="#5e5e62"/><rect x="52" y="4" width="1" height="1" fill="#5e5e62"/><rect x="54" y="0" width="1" height="1" fill="#5e5e62"/><rect x="55" y="2" width="1" height="1" fill="#5e5e62"/><rect x="54" y="4" width="1" height="1" fill="#5e5e62"/><rect x="56" y="0" width="1" height="1" fill="#5e5e62"/><rect x="57" y="2" width="1" height="1" fill="#5e5e62"/><rect x="56" y="4" width="1" height="1" fill="#5e5e62"/><rect x="58" y="0" width="1" height="1" fill="#5e5e62"/><rect x="59" y="2" width="1" height="1" fill="#5e5e62"/><rect x="58" y="4" width="1" height="1" fill="#5e5e62"/><rect x="60" y="0" width="1" height="1" fill="#5e5e62"/><rect x="61" y="2" width="1" height="1" fill="#5e5e62"/><rect x="60" y="4" width="1" height="1" fill="#5e5e62"/><rect x="62" y="0" width="1" height="1" fill="#5e5e62"/><rect x="63" y="2" width="1" height="1" fill="#5e5e62"/><rect x="62" y="4" width="1" height="1" fill="#5e5e62"/><rect x="64" y="0" width="1" height="1" fill="#5e5e62"/><rect x="65" y="2" width="1" height="1" fill="#5e5e62"/><rect x="64" y="4" width="1" height="1" fill="#5e5e62"/><rect x="66" y="0" width="1" height="1" fill="#5e5e62"/><rect x="67" y="2" width="1" height="1" fill="#5e5e62"/><rect x="66" y="4" width="1" height="1" fill="#5e5e62"/><rect x="68" y="0" width="1" height="1" fill="#5e5e62"/><rect x="69" y="2" width="1" height="1" fill="#5e5e62"/><rect x="68" y="4" width="1" height="1" fill="#5e5e62"/><rect x="70" y="0" width="1" height="1" fill="#5e5e62"/><rect x="71" y="2" width="1" height="1" fill="#5e5e62"/><rect x="70" y="4" width="1" height="1" fill="#5e5e62"/><rect x="72" y="0" width="1" height="1" fill="#5e5e62"/><rect x="73" y="2" width="1" height="1" fill="#5e5e62"/><rect x="72" y="4" width="1" height="1" fill="#5e5e62"/><rect x="74" y="0" width="1" height="1" fill="#5e5e62"/><rect x="75" y="2" width="1" height="1" fill="#5e5e62"/><rect x="74" y="4" width="1" height="1" fill="#5e5e62"/><rect x="76" y="0" width="1" height="1" fill="#5e5e62"/><rect x="77" y="2" width="1" height="1" fill="#5e5e62"/><rect x="76" y="4" width="1" height="1" fill="#5e5e62"/><rect x="78" y="0" width="1" height="1" fill="#5e5e62"/><rect x="79" y="2" width="1" height="1" fill="#5e5e62"/><rect x="78" y="4" width="1" height="1" fill="#5e5e62"/><rect x="80" y="0" width="1" height="1" fill="#5e5e62"/><rect x="81" y="2" width="1" height="1" fill="#5e5e62"/><rect x="80" y="4" width="1" height="1" fill="#5e5e62"/><rect x="82" y="0" width="1" height="1" fill="#5e5e62"/><rect x="83" y="2" width="1" height="1" fill="#5e5e62"/><rect x="82" y="4" width="1" height="1" fill="#5e5e62"/><rect x="84" y="0" width="1" height="1" fill="#5e5e62"/><rect x="85" y="2" width="1" height="1" fill="#5e5e62"/><rect x="84" y="4" width="1" height="1" fill="#5e5e62"/><rect x="86" y="0" width="1" height="1" fill="#5e5e62"/><rect x="87" y="2" width="1" height="1" fill="#5e5e62"/><rect x="86" y="4" width="1" height="1" fill="#5e5e62"/><rect x="88" y="0" width="1" height="1" fill="#5e5e62"/><rect x="89" y="2" width="1" height="1" fill="#5e5e62"/><rect x="88" y="4" width="1" height="1" fill="#5e5e62"/><rect x="90" y="0" width="1" height="1" fill="#5e5e62"/><rect x="91" y="2" width="1" height="1" fill="#5e5e62"/><rect x="90" y="4" width="1" height="1" fill="#5e5e62"/><rect x="92" y="0" width="1" height="1" fill="#5e5e62"/><rect x="93" y="2" width="1" height="1" fill="#5e5e62"/><rect x="92" y="4" width="1" height="1" fill="#5e5e62"/><rect x="94" y="0" width="1" height="1" fill="#5e5e62"/><rect x="95" y="2" width="1" height="1" fill="#5e5e62"/><rect x="94" y="4" width="1" height="1" fill="#5e5e62"/><rect x="96" y="0" width="1" height="1" fill="#5e5e62"/><rect x="97" y="2" width="1" height="1" fill="#5e5e62"/><rect x="96" y="4" width="1" height="1" fill="#5e5e62"/><rect x="98" y="0" width="1" height="1" fill="#5e5e62"/><rect x="99" y="2" width="1" height="1" fill="#5e5e62"/><rect x="98" y="4" width="1" height="1" fill="#5e5e62"/><rect x="100" y="0" width="1" height="1" fill="#5e5e62"/><rect x="101" y="2" width="1" height="1" fill="#5e5e62"/><rect x="100" y="4" width="1" height="1" fill="#5e5e62"/><rect x="102" y="0" width="1" height="1" fill="#5e5e62"/><rect x="103" y="2" width="1" height="1" fill="#5e5e62"/><rect x="102" y="4" width="1" height="1" fill="#5e5e62"/><rect x="104" y="0" width="1" height="1" fill="#5e5e62"/><rect x="105" y="2" width="1" height="1" fill="#5e5e62"/><rect x="104" y="4" width="1" height="1" fill="#5e5e62"/><rect x="106" y="0" width="1" height="1" fill="#5e5e62"/><rect x="107" y="2" width="1" height="1" fill="#5e5e62"/><rect x="106" y="4" width="1" height="1" fill="#5e5e62"/><rect x="108" y="0" width="1" height="1" fill="#5e5e62"/><rect x="109" y="2" width="1" height="1" fill="#5e5e62"/><rect x="108" y="4" width="1" height="1" fill="#5e5e62"/><rect x="110" y="0" width="1" height="1" fill="#5e5e62"/><rect x="111" y="2" width="1" height="1" fill="#5e5e62"/><rect x="110" y="4" width="1" height="1" fill="#5e5e62"/><rect x="112" y="0" width="1" height="1" fill="#5e5e62"/><rect x="113" y="2" width="1" height="1" fill="#5e5e62"/><rect x="112" y="4" width="1" height="1" fill="#5e5e62"/><rect x="114" y="0" width="1" height="1" fill="#5e5e62"/><rect x="115" y="2" width="1" height="1" fill="#5e5e62"/><rect x="114" y="4" width="1" height="1" fill="#5e5e62"/><rect x="116" y="0" width="1" height="1" fill="#5e5e62"/><rect x="117" y="2" width="1" height="1" fill="#5e5e62"/><rect x="116" y="4" width="1" height="1" fill="#5e5e62"/><rect x="118" y="0" width="1" height="1" fill="#5e5e62"/><rect x="119" y="2" width="1" height="1" fill="#5e5e62"/><rect x="118" y="4" width="1" height="1" fill="#5e5e62"/><rect x="120" y="0" width="1" height="1" fill="#5e5e62"/><rect x="121" y="2" width="1" height="1" fill="#5e5e62"/><rect x="120" y="4" width="1" height="1" fill="#5e5e62"/><rect x="122" y="0" width="1" height="1" fill="#5e5e62"/><rect x="123" y="2" width="1" height="1" fill="#5e5e62"/><rect x="122" y="4" width="1" height="1" fill="#5e5e62"/><rect x="124" y="0" width="1" height="1" fill="#5e5e62"/><rect x="125" y="2" width="1" height="1" fill="#5e5e62"/><rect x="124" y="4" width="1" height="1" fill="#5e5e62"/><rect x="126" y="0" width="1" height="1" fill="#5e5e62"/><rect x="127" y="2" width="1" height="1" fill="#5e5e62"/><rect x="126" y="4" width="1" height="1" fill="#5e5e62"/><rect x="128" y="0" width="1" height="1" fill="#5e5e62"/><rect x="129" y="2" width="1" height="1" fill="#5e5e62"/><rect x="128" y="4" width="1" height="1" fill="#5e5e62"/><rect x="130" y="0" width="1" height="1" fill="#5e5e62"/><rect x="131" y="2" width="1" height="1" fill="#5e5e62"/><rect x="130" y="4" width="1" height="1" fill="#5e5e62"/><rect x="132" y="0" width="1" height="1" fill="#5e5e62"/><rect x="133" y="2" width="1" height="1" fill="#5e5e62"/><rect x="132" y="4" width="1" height="1" fill="#5e5e62"/><rect x="134" y="0" width="1" height="1" fill="#5e5e62"/><rect x="135" y="2" width="1" height="1" fill="#5e5e62"/><rect x="134" y="4" width="1" height="1" fill="#5e5e62"/><rect x="136" y="0" width="1" height="1" fill="#5e5e62"/><rect x="137" y="2" width="1" height="1" fill="#5e5e62"/><rect x="136" y="4" width="1" height="1" fill="#5e5e62"/><rect x="138" y="0" width="1" height="1" fill="#5e5e62"/><rect x="139" y="2" width="1" height="1" fill="#5e5e62"/><rect x="138" y="4" width="1" height="1" fill="#5e5e62"/><rect x="140" y="0" width="1" height="1" fill="#5e5e62"/><rect x="141" y="2" width="1" height="1" fill="#5e5e62"/><rect x="140" y="4" width="1" height="1" fill="#5e5e62"/><rect x="142" y="0" width="1" height="1" fill="#5e5e62"/><rect x="143" y="2" width="1" height="1" fill="#5e5e62"/><rect x="142" y="4" width="1" height="1" fill="#5e5e62"/><rect x="144" y="0" width="1" height="1" fill="#5e5e62"/><rect x="145" y="2" width="1" height="1" fill="#5e5e62"/><rect x="144" y="4" width="1" height="1" fill="#5e5e62"/><rect x="146" y="0" width="1" height="1" fill="#5e5e62"/><rect x="147" y="2" width="1" height="1" fill="#5e5e62"/><rect x="146" y="4" width="1" height="1" fill="#5e5e62"/><rect x="148" y="0" width="1" height="1" fill="#5e5e62"/><rect x="149" y="2" width="1" height="1" fill="#5e5e62"/><rect x="148" y="4" width="1" height="1" fill="#5e5e62"/><rect x="150" y="0" width="1" height="1" fill="#5e5e62"/><rect x="151" y="2" width="1" height="1" fill="#5e5e62"/><rect x="150" y="4" width="1" height="1" fill="#5e5e62"/><rect x="152" y="0" width="1" height="1" fill="#5e5e62"/><rect x="153" y="2" width="1" height="1" fill="#5e5e62"/><rect x="152" y="4" width="1" height="1" fill="#5e5e62"/><rect x="154" y="0" width="1" height="1" fill="#5e5e62"/><rect x="155" y="2" width="1" height="1" fill="#5e5e62"/><rect x="154" y="4" width="1" height="1" fill="#5e5e62"/><rect x="156" y="0" width="1" height="1" fill="#5e5e62"/><rect x="157" y="2" width="1" height="1" fill="#5e5e62"/><rect x="156" y="4" width="1" height="1" fill="#5e5e62"/><rect x="158" y="0" width="1" height="1" fill="#5e5e62"/><rect x="159" y="2" width="1" height="1" fill="#5e5e62"/><rect x="158" y="4" width="1" height="1" fill="#5e5e62"/><rect x="160" y="0" width="1" height="1" fill="#5e5e62"/><rect x="161" y="2" width="1" height="1" fill="#5e5e62"/><rect x="160" y="4" width="1" height="1" fill="#5e5e62"/><rect x="162" y="0" width="1" height="1" fill="#5e5e62"/><rect x="163" y="2" width="1" height="1" fill="#5e5e62"/><rect x="162" y="4" width="1" height="1" fill="#5e5e62"/><rect x="164" y="0" width="1" height="1" fill="#5e5e62"/><rect x="165" y="2" width="1" height="1" fill="#5e5e62"/><rect x="164" y="4" width="1" height="1" fill="#5e5e62"/><rect x="166" y="0" width="1" height="1" fill="#5e5e62"/><rect x="167" y="2" width="1" height="1" fill="#5e5e62"/><rect x="166" y="4" width="1" height="1" fill="#5e5e62"/><rect x="168" y="0" width="1" height="1" fill="#5e5e62"/><rect x="169" y="2" width="1" height="1" fill="#5e5e62"/><rect x="168" y="4" width="1" height="1" fill="#5e5e62"/><rect x="170" y="0" width="1" height="1" fill="#5e5e62"/><rect x="171" y="2" width="1" height="1" fill="#5e5e62"/><rect x="170" y="4" width="1" height="1" fill="#5e5e62"/><rect x="172" y="0" width="1" height="1" fill="#5e5e62"/><rect x="173" y="2" width="1" height="1" fill="#5e5e62"/><rect x="172" y="4" width="1" height="1" fill="#5e5e62"/><rect x="174" y="0" width="1" height="1" fill="#5e5e62"/><rect x="175" y="2" width="1" height="1" fill="#5e5e62"/><rect x="174" y="4" width="1" height="1" fill="#5e5e62"/><rect x="176" y="0" width="1" height="1" fill="#5e5e62"/><rect x="177" y="2" width="1" height="1" fill="#5e5e62"/><rect x="176" y="4" width="1" height="1" fill="#5e5e62"/><rect x="178" y="0" width="1" height="1" fill="#5e5e62"/><rect x="179" y="2" width="1" height="1" fill="#5e5e62"/><rect x="178" y="4" width="1" height="1" fill="#5e5e62"/><rect x="180" y="0" width="1" height="1" fill="#5e5e62"/><rect x="181" y="2" width="1" height="1" fill="#5e5e62"/><rect x="180" y="4" width="1" height="1" fill="#5e5e62"/><rect x="182" y="0" width="1" height="1" fill="#5e5e62"/><rect x="183" y="2" width="1" height="1" fill="#5e5e62"/><rect x="182" y="4" width="1" height="1" fill="#5e5e62"/><rect x="184" y="0" width="1" height="1" fill="#5e5e62"/><rect x="185" y="2" width="1" height="1" fill="#5e5e62"/><rect x="184" y="4" width="1" height="1" fill="#5e5e62"/><rect x="186" y="0" width="1" height="1" fill="#5e5e62"/><rect x="187" y="2" width="1" height="1" fill="#5e5e62"/><rect x="186" y="4" width="1" height="1" fill="#5e5e62"/><rect x="188" y="0" width="1" height="1" fill="#5e5e62"/><rect x="189" y="2" width="1" height="1" fill="#5e5e62"/><rect x="188" y="4" width="1" height="1" fill="#5e5e62"/><rect x="190" y="0" width="1" height="1" fill="#5e5e62"/><rect x="191" y="2" width="1" height="1" fill="#5e5e62"/><rect x="190" y="4" width="1" height="1" fill="#5e5e62"/><rect x="192" y="0" width="1" height="1" fill="#5e5e62"/><rect x="193" y="2" width="1" height="1" fill="#5e5e62"/><rect x="192" y="4" width="1" height="1" fill="#5e5e62"/><rect x="194" y="0" width="1" height="1" fill="#5e5e62"/><rect x="195" y="2" width="1" height="1" fill="#5e5e62"/><rect x="194" y="4" width="1" height="1" fill="#5e5e62"/><rect x="196" y="0" width="1" height="1" fill="#5e5e62"/><rect x="197" y="2" width="1" height="1" fill="#5e5e62"/><rect x="196" y="4" width="1" height="1" fill="#5e5e62"/><rect x="198" y="0" width="1" height="1" fill="#5e5e62"/><rect x="199" y="2" width="1" height="1" fill="#5e5e62"/><rect x="198" y="4" width="1" height="1" fill="#5e5e62"/><rect x="200" y="0" width="1" height="1" fill="#5e5e62"/><rect x="201" y="2" width="1" height="1" fill="#5e5e62"/><rect x="200" y="4" width="1" height="1" fill="#5e5e62"/><rect x="202" y="0" width="1" height="1" fill="#5e5e62"/><rect x="203" y="2" width="1" height="1" fill="#5e5e62"/><rect x="202" y="4" width="1" height="1" fill="#5e5e62"/><rect x="204" y="0" width="1" height="1" fill="#5e5e62"/><rect x="205" y="2" width="1" height="1" fill="#5e5e62"/><rect x="204" y="4" width="1" height="1" fill="#5e5e62"/><rect x="206" y="0" width="1" height="1" fill="#5e5e62"/><rect x="207" y="2" width="1" height="1" fill="#5e5e62"/><rect x="206" y="4" width="1" height="1" fill="#5e5e62"/><rect x="208" y="0" width="1" height="1" fill="#5e5e62"/><rect x="209" y="2" width="1" height="1" fill="#5e5e62"/><rect x="208" y="4" width="1" height="1" fill="#5e5e62"/><rect x="210" y="0" width="1" height="1" fill="#5e5e62"/><rect x="211" y="2" width="1" height="1" fill="#5e5e62"/><rect x="210" y="4" width="1" height="1" fill="#5e5e62"/><rect x="212" y="0" width="1" height="1" fill="#5e5e62"/><rect x="213" y="2" width="1" height="1" fill="#5e5e62"/><rect x="212" y="4" width="1" height="1" fill="#5e5e62"/><rect x="214" y="0" width="1" height="1" fill="#5e5e62"/><rect x="215" y="2" width="1" height="1" fill="#5e5e62"/><rect x="214" y="4" width="1" height="1" fill="#5e5e62"/><rect x="216" y="0" width="1" height="1" fill="#5e5e62"/><rect x="217" y="2" width="1" height="1" fill="#5e5e62"/><rect x="216" y="4" width="1" height="1" fill="#5e5e62"/><rect x="218" y="0" width="1" height="1" fill="#5e5e62"/><rect x="219" y="2" width="1" height="1" fill="#5e5e62"/><rect x="218" y="4" width="1" height="1" fill="#5e5e62"/><rect x="220" y="0" width="1" height="1" fill="#5e5e62"/><rect x="221" y="2" width="1" height="1" fill="#5e5e62"/><rect x="220" y="4" width="1" height="1" fill="#5e5e62"/><rect x="222" y="0" width="1" height="1" fill="#5e5e62"/><rect x="223" y="2" width="1" height="1" fill="#5e5e62"/><rect x="222" y="4" width="1" height="1" fill="#5e5e62"/><rect x="224" y="0" width="1" height="1" fill="#5e5e62"/><rect x="225" y="2" width="1" height="1" fill="#5e5e62"/><rect x="224" y="4" width="1" height="1" fill="#5e5e62"/><rect x="226" y="0" width="1" height="1" fill="#5e5e62"/><rect x="227" y="2" width="1" height="1" fill="#5e5e62"/><rect x="226" y="4" width="1" height="1" fill="#5e5e62"/><rect x="228" y="0" width="1" height="1" fill="#5e5e62"/><rect x="229" y="2" width="1" height="1" fill="#5e5e62"/><rect x="228" y="4" width="1" height="1" fill="#5e5e62"/><rect x="230" y="0" width="1" height="1" fill="#5e5e62"/><rect x="231" y="2" width="1" height="1" fill="#5e5e62"/><rect x="230" y="4" width="1" height="1" fill="#5e5e62"/><rect x="232" y="0" width="1" height="1" fill="#5e5e62"/><rect x="233" y="2" width="1" height="1" fill="#5e5e62"/><rect x="232" y="4" width="1" height="1" fill="#5e5e62"/><rect x="234" y="0" width="1" height="1" fill="#5e5e62"/><rect x="235" y="2" width="1" height="1" fill="#5e5e62"/><rect x="234" y="4" width="1" height="1" fill="#5e5e62"/><rect x="236" y="0" width="1" height="1" fill="#5e5e62"/><rect x="237" y="2" width="1" height="1" fill="#5e5e62"/><rect x="236" y="4" width="1" height="1" fill="#5e5e62"/><rect x="238" y="0" width="1" height="1" fill="#5e5e62"/><rect x="239" y="2" width="1" height="1" fill="#5e5e62"/><rect x="238" y="4" width="1" height="1" fill="#5e5e62"/><rect x="240" y="0" width="1" height="1" fill="#5e5e62"/><rect x="241" y="2" width="1" height="1" fill="#5e5e62"/><rect x="240" y="4" width="1" height="1" fill="#5e5e62"/><rect x="242" y="0" width="1" height="1" fill="#5e5e62"/><rect x="243" y="2" width="1" height="1" fill="#5e5e62"/><rect x="242" y="4" width="1" height="1" fill="#5e5e62"/><rect x="244" y="0" width="1" height="1" fill="#5e5e62"/><rect x="245" y="2" width="1" height="1" fill="#5e5e62"/><rect x="244" y="4" width="1" height="1" fill="#5e5e62"/><rect x="246" y="0" width="1" height="1" fill="#5e5e62"/><rect x="247" y="2" width="1" height="1" fill="#5e5e62"/><rect x="246" y="4" width="1" height="1" fill="#5e5e62"/><rect x="248" y="0" width="1" height="1" fill="#5e5e62"/><rect x="249" y="2" width="1" height="1" fill="#5e5e62"/><rect x="248" y="4" width="1" height="1" fill="#5e5e62"/><rect x="250" y="0" width="1" height="1" fill="#5e5e62"/><rect x="251" y="2" width="1" height="1" fill="#5e5e62"/><rect x="250" y="4" width="1" height="1" fill="#5e5e62"/><rect x="252" y="0" width="1" height="1" fill="#5e5e62"/><rect x="253" y="2" width="1" height="1" fill="#5e5e62"/><rect x="252" y="4" width="1" height="1" fill="#5e5e62"/><rect x="254" y="0" width="1" height="1" fill="#5e5e62"/><rect x="255" y="2" width="1" height="1" fill="#5e5e62"/><rect x="254" y="4" width="1" height="1" fill="#5e5e62"/><rect x="256" y="0" width="1" height="1" fill="#5e5e62"/><rect x="257" y="2" width="1" height="1" fill="#5e5e62"/><rect x="256" y="4" width="1" height="1" fill="#5e5e62"/><rect x="258" y="0" width="1" height="1" fill="#5e5e62"/><rect x="259" y="2" width="1" height="1" fill="#5e5e62"/><rect x="258" y="4" width="1" height="1" fill="#5e5e62"/><rect x="260" y="0" width="1" height="1" fill="#5e5e62"/><rect x="261" y="2" width="1" height="1" fill="#5e5e62"/><rect x="260" y="4" width="1" height="1" fill="#5e5e62"/><rect x="262" y="0" width="1" height="1" fill="#5e5e62"/><rect x="263" y="2" width="1" height="1" fill="#5e5e62"/><rect x="262" y="4" width="1" height="1" fill="#5e5e62"/><rect x="264" y="0" width="1" height="1" fill="#5e5e62"/><rect x="265" y="2" width="1" height="1" fill="#5e5e62"/><rect x="264" y="4" width="1" height="1" fill="#5e5e62"/><rect x="266" y="0" width="1" height="1" fill="#5e5e62"/><rect x="267" y="2" width="1" height="1" fill="#5e5e62"/><rect x="266" y="4" width="1" height="1" fill="#5e5e62"/><rect x="268" y="0" width="1" height="1" fill="#5e5e62"/><rect x="269" y="2" width="1" height="1" fill="#5e5e62"/><rect x="268" y="4" width="1" height="1" fill="#5e5e62"/><rect x="270" y="0" width="1" height="1" fill="#5e5e62"/><rect x="271" y="2" width="1" height="1" fill="#5e5e62"/><rect x="270" y="4" width="1" height="1" fill="#5e5e62"/><rect x="272" y="0" width="1" height="1" fill="#5e5e62"/><rect x="273" y="2" width="1" height="1" fill="#5e5e62"/><rect x="272" y="4" width="1" height="1" fill="#5e5e62"/><rect x="274" y="0" width="1" height="1" fill="#5e5e62"/><rect x="275" y="2" width="1" height="1" fill="#5e5e62"/><rect x="274" y="4" width="1" height="1" fill="#5e5e62"/><rect x="276" y="0" width="1" height="1" fill="#5e5e62"/><rect x="277" y="2" width="1" height="1" fill="#5e5e62"/><rect x="276" y="4" width="1" height="1" fill="#5e5e62"/><rect x="278" y="0" width="1" height="1" fill="#5e5e62"/><rect x="279" y="2" width="1" height="1" fill="#5e5e62"/><rect x="278" y="4" width="1" height="1" fill="#5e5e62"/><rect x="280" y="0" width="1" height="1" fill="#5e5e62"/><rect x="281" y="2" width="1" height="1" fill="#5e5e62"/><rect x="280" y="4" width="1" height="1" fill="#5e5e62"/><rect x="282" y="0" width="1" height="1" fill="#5e5e62"/><rect x="283" y="2" width="1" height="1" fill="#5e5e62"/><rect x="282" y="4" width="1" height="1" fill="#5e5e62"/><rect x="284" y="0" width="1" height="1" fill="#5e5e62"/><rect x="285" y="2" width="1" height="1" fill="#5e5e62"/><rect x="284" y="4" width="1" height="1" fill="#5e5e62"/><rect x="286" y="0" width="1" height="1" fill="#5e5e62"/><rect x="287" y="2" width="1" height="1" fill="#5e5e62"/><rect x="286" y="4" width="1" height="1" fill="#5e5e62"/><rect x="288" y="0" width="1" height="1" fill="#5e5e62"/><rect x="289" y="2" width="1" height="1" fill="#5e5e62"/><rect x="288" y="4" width="1" height="1" fill="#5e5e62"/><rect x="290" y="0" width="1" height="1" fill="#5e5e62"/><rect x="291" y="2" width="1" height="1" fill="#5e5e62"/><rect x="290" y="4" width="1" height="1" fill="#5e5e62"/><rect x="292" y="0" width="1" height="1" fill="#5e5e62"/><rect x="293" y="2" width="1" height="1" fill="#5e5e62"/><rect x="292" y="4" width="1" height="1" fill="#5e5e62"/><rect x="294" y="0" width="1" height="1" fill="#5e5e62"/><rect x="295" y="2" width="1" height="1" fill="#5e5e62"/><rect x="294" y="4" width="1" height="1" fill="#5e5e62"/><rect x="296" y="0" width="1" height="1" fill="#5e5e62"/><rect x="297" y="2" width="1" height="1" fill="#5e5e62"/><rect x="296" y="4" width="1" height="1" fill="#5e5e62"/><rect x="298" y="0" width="1" height="1" fill="#5e5e62"/><rect x="299" y="2" width="1" height="1" fill="#5e5e62"/><rect x="298" y="4" width="1" height="1" fill="#5e5e62"/><rect x="300" y="0" width="1" height="1" fill="#5e5e62"/><rect x="301" y="2" width="1" height="1" fill="#5e5e62"/><rect x="300" y="4" width="1" height="1" fill="#5e5e62"/><rect x="302" y="0" width="1" height="1" fill="#5e5e62"/><rect x="303" y="2" width="1" height="1" fill="#5e5e62"/><rect x="302" y="4" width="1" height="1" fill="#5e5e62"/><rect x="304" y="0" width="1" height="1" fill="#5e5e62"/><rect x="305" y="2" width="1" height="1" fill="#5e5e62"/><rect x="304" y="4" width="1" height="1" fill="#5e5e62"/><rect x="306" y="0" width="1" height="1" fill="#5e5e62"/><rect x="307" y="2" width="1" height="1" fill="#5e5e62"/><rect x="306" y="4" width="1" height="1" fill="#5e5e62"/><rect x="308" y="0" width="1" height="1" fill="#5e5e62"/><rect x="309" y="2" width="1" height="1" fill="#5e5e62"/><rect x="308" y="4" width="1" height="1" fill="#5e5e62"/><rect x="310" y="0" width="1" height="1" fill="#5e5e62"/><rect x="311" y="2" width="1" height="1" fill="#5e5e62"/><rect x="310" y="4" width="1" height="1" fill="#5e5e62"/><rect x="312" y="0" width="1" height="1" fill="#5e5e62"/><rect x="313" y="2" width="1" height="1" fill="#5e5e62"/><rect x="312" y="4" width="1" height="1" fill="#5e5e62"/><rect x="314" y="0" width="1" height="1" fill="#5e5e62"/><rect x="315" y="2" width="1" height="1" fill="#5e5e62"/><rect x="314" y="4" width="1" height="1" fill="#5e5e62"/><rect x="316" y="0" width="1" height="1" fill="#5e5e62"/><rect x="317" y="2" width="1" height="1" fill="#5e5e62"/><rect x="316" y="4" width="1" height="1" fill="#5e5e62"/><rect x="318" y="0" width="1" height="1" fill="#5e5e62"/><rect x="319" y="2" width="1" height="1" fill="#5e5e62"/><rect x="318" y="4" width="1" height="1" fill="#5e5e62"/><rect x="320" y="0" width="1" height="1" fill="#5e5e62"/><rect x="321" y="2" width="1" height="1" fill="#5e5e62"/><rect x="320" y="4" width="1" height="1" fill="#5e5e62"/><rect x="322" y="0" width="1" height="1" fill="#5e5e62"/><rect x="323" y="2" width="1" height="1" fill="#5e5e62"/><rect x="322" y="4" width="1" height="1" fill="#5e5e62"/><rect x="324" y="0" width="1" height="1" fill="#5e5e62"/><rect x="325" y="2" width="1" height="1" fill="#5e5e62"/><rect x="324" y="4" width="1" height="1" fill="#5e5e62"/><rect x="326" y="0" width="1" height="1" fill="#5e5e62"/><rect x="327" y="2" width="1" height="1" fill="#5e5e62"/><rect x="326" y="4" width="1" height="1" fill="#5e5e62"/><rect x="328" y="0" width="1" height="1" fill="#5e5e62"/><rect x="329" y="2" width="1" height="1" fill="#5e5e62"/><rect x="328" y="4" width="1" height="1" fill="#5e5e62"/><rect x="330" y="0" width="1" height="1" fill="#5e5e62"/><rect x="331" y="2" width="1" height="1" fill="#5e5e62"/><rect x="330" y="4" width="1" height="1" fill="#5e5e62"/><rect x="332" y="0" width="1" height="1" fill="#5e5e62"/><rect x="333" y="2" width="1" height="1" fill="#5e5e62"/><rect x="332" y="4" width="1" height="1" fill="#5e5e62"/><rect x="334" y="0" width="1" height="1" fill="#5e5e62"/><rect x="335" y="2" width="1" height="1" fill="#5e5e62"/><rect x="334" y="4" width="1" height="1" fill="#5e5e62"/><rect x="336" y="0" width="1" height="1" fill="#5e5e62"/><rect x="337" y="2" width="1" height="1" fill="#5e5e62"/><rect x="336" y="4" width="1" height="1" fill="#5e5e62"/><rect x="338" y="0" width="1" height="1" fill="#5e5e62"/><rect x="339" y="2" width="1" height="1" fill="#5e5e62"/><rect x="338" y="4" width="1" height="1" fill="#5e5e62"/><rect x="340" y="0" width="1" height="1" fill="#5e5e62"/><rect x="341" y="2" width="1" height="1" fill="#5e5e62"/><rect x="340" y="4" width="1" height="1" fill="#5e5e62"/><rect x="342" y="0" width="1" height="1" fill="#5e5e62"/><rect x="343" y="2" width="1" height="1" fill="#5e5e62"/><rect x="342" y="4" width="1" height="1" fill="#5e5e62"/><rect x="344" y="0" width="1" height="1" fill="#5e5e62"/><rect x="345" y="2" width="1" height="1" fill="#5e5e62"/><rect x="344" y="4" width="1" height="1" fill="#5e5e62"/><rect x="346" y="0" width="1" height="1" fill="#5e5e62"/><rect x="347" y="2" width="1" height="1" fill="#5e5e62"/><rect x="346" y="4" width="1" height="1" fill="#5e5e62"/><rect x="348" y="0" width="1" height="1" fill="#5e5e62"/><rect x="349" y="2" width="1" height="1" fill="#5e5e62"/><rect x="348" y="4" width="1" height="1" fill="#5e5e62"/><rect x="350" y="0" width="1" height="1" fill="#5e5e62"/><rect x="351" y="2" width="1" height="1" fill="#5e5e62"/><rect x="350" y="4" width="1" height="1" fill="#5e5e62"/><rect x="352" y="0" width="1" height="1" fill="#5e5e62"/><rect x="353" y="2" width="1" height="1" fill="#5e5e62"/><rect x="352" y="4" width="1" height="1" fill="#5e5e62"/><rect x="354" y="0" width="1" height="1" fill="#5e5e62"/><rect x="355" y="2" width="1" height="1" fill="#5e5e62"/><rect x="354" y="4" width="1" height="1" fill="#5e5e62"/><rect x="356" y="0" width="1" height="1" fill="#5e5e62"/><rect x="357" y="2" width="1" height="1" fill="#5e5e62"/><rect x="356" y="4" width="1" height="1" fill="#5e5e62"/><rect x="358" y="0" width="1" height="1" fill="#5e5e62"/><rect x="359" y="2" width="1" height="1" fill="#5e5e62"/><rect x="358" y="4" width="1" height="1" fill="#5e5e62"/><rect x="360" y="0" width="1" height="1" fill="#5e5e62"/><rect x="361" y="2" width="1" height="1" fill="#5e5e62"/><rect x="360" y="4" width="1" height="1" fill="#5e5e62"/><rect x="362" y="0" width="1" height="1" fill="#5e5e62"/><rect x="363" y="2" width="1" height="1" fill="#5e5e62"/><rect x="362" y="4" width="1" height="1" fill="#5e5e62"/><rect x="364" y="0" width="1" height="1" fill="#5e5e62"/><rect x="365" y="2" width="1" height="1" fill="#5e5e62"/><rect x="364" y="4" width="1" height="1" fill="#5e5e62"/><rect x="366" y="0" width="1" height="1" fill="#5e5e62"/><rect x="367" y="2" width="1" height="1" fill="#5e5e62"/><rect x="366" y="4" width="1" height="1" fill="#5e5e62"/><rect x="368" y="0" width="1" height="1" fill="#5e5e62"/><rect x="369" y="2" width="1" height="1" fill="#5e5e62"/><rect x="368" y="4" width="1" height="1" fill="#5e5e62"/><rect x="370" y="0" width="1" height="1" fill="#5e5e62"/><rect x="371" y="2" width="1" height="1" fill="#5e5e62"/><rect x="370" y="4" width="1" height="1" fill="#5e5e62"/><rect x="372" y="0" width="1" height="1" fill="#5e5e62"/><rect x="373" y="2" width="1" height="1" fill="#5e5e62"/><rect x="372" y="4" width="1" height="1" fill="#5e5e62"/><rect x="374" y="0" width="1" height="1" fill="#5e5e62"/><rect x="375" y="2" width="1" height="1" fill="#5e5e62"/><rect x="374" y="4" width="1" height="1" fill="#5e5e62"/><rect x="376" y="0" width="1" height="1" fill="#5e5e62"/><rect x="377" y="2" width="1" height="1" fill="#5e5e62"/><rect x="376" y="4" width="1" height="1" fill="#5e5e62"/><rect x="378" y="0" width="1" height="1" fill="#5e5e62"/><rect x="379" y="2" width="1" height="1" fill="#5e5e62"/><rect x="378" y="4" width="1" height="1" fill="#5e5e62"/><rect x="380" y="0" width="1" height="1" fill="#5e5e62"/><rect x="381" y="2" width="1" height="1" fill="#5e5e62"/><rect x="380" y="4" width="1" height="1" fill="#5e5e62"/><rect x="382" y="0" width="1" height="1" fill="#5e5e62"/><rect x="383" y="2" width="1" height="1" fill="#5e5e62"/><rect x="382" y="4" width="1" height="1" fill="#5e5e62"/><rect x="384" y="0" width="1" height="1" fill="#5e5e62"/><rect x="385" y="2" width="1" height="1" fill="#5e5e62"/><rect x="384" y="4" width="1" height="1" fill="#5e5e62"/><rect x="386" y="0" width="1" height="1" fill="#5e5e62"/><rect x="387" y="2" width="1" height="1" fill="#5e5e62"/><rect x="386" y="4" width="1" height="1" fill="#5e5e62"/><rect x="388" y="0" width="1" height="1" fill="#5e5e62"/><rect x="389" y="2" width="1" height="1" fill="#5e5e62"/><rect x="388" y="4" width="1" height="1" fill="#5e5e62"/><rect x="390" y="0" width="1" height="1" fill="#5e5e62"/><rect x="391" y="2" width="1" height="1" fill="#5e5e62"/><rect x="390" y="4" width="1" height="1" fill="#5e5e62"/><rect x="392" y="0" width="1" height="1" fill="#5e5e62"/><rect x="393" y="2" width="1" height="1" fill="#5e5e62"/><rect x="392" y="4" width="1" height="1" fill="#5e5e62"/><rect x="394" y="0" width="1" height="1" fill="#5e5e62"/><rect x="395" y="2" width="1" height="1" fill="#5e5e62"/><rect x="394" y="4" width="1" height="1" fill="#5e5e62"/><rect x="396" y="0" width="1" height="1" fill="#5e5e62"/><rect x="397" y="2" width="1" height="1" fill="#5e5e62"/><rect x="396" y="4" width="1" height="1" fill="#5e5e62"/><rect x="398" y="0" width="1" height="1" fill="#5e5e62"/><rect x="399" y="2" width="1" height="1" fill="#5e5e62"/><rect x="398" y="4" width="1" height="1" fill="#5e5e62"/><rect x="400" y="0" width="1" height="1" fill="#5e5e62"/><rect x="401" y="2" width="1" height="1" fill="#5e5e62"/><rect x="400" y="4" width="1" height="1" fill="#5e5e62"/><rect x="402" y="0" width="1" height="1" fill="#5e5e62"/><rect x="403" y="2" width="1" height="1" fill="#5e5e62"/><rect x="402" y="4" width="1" height="1" fill="#5e5e62"/><rect x="404" y="0" width="1" height="1" fill="#5e5e62"/><rect x="405" y="2" width="1" height="1" fill="#5e5e62"/><rect x="404" y="4" width="1" height="1" fill="#5e5e62"/><rect x="406" y="0" width="1" height="1" fill="#5e5e62"/><rect x="407" y="2" width="1" height="1" fill="#5e5e62"/><rect x="406" y="4" width="1" height="1" fill="#5e5e62"/><rect x="408" y="0" width="1" height="1" fill="#5e5e62"/><rect x="409" y="2" width="1" height="1" fill="#5e5e62"/><rect x="408" y="4" width="1" height="1" fill="#5e5e62"/><rect x="410" y="0" width="1" height="1" fill="#5e5e62"/><rect x="411" y="2" width="1" height="1" fill="#5e5e62"/><rect x="410" y="4" width="1" height="1" fill="#5e5e62"/><rect x="412" y="0" width="1" height="1" fill="#5e5e62"/><rect x="413" y="2" width="1" height="1" fill="#5e5e62"/><rect x="412" y="4" width="1" height="1" fill="#5e5e62"/><rect x="414" y="0" width="1" height="1" fill="#5e5e62"/><rect x="415" y="2" width="1" height="1" fill="#5e5e62"/><rect x="414" y="4" width="1" height="1" fill="#5e5e62"/><rect x="416" y="0" width="1" height="1" fill="#5e5e62"/><rect x="417" y="2" width="1" height="1" fill="#5e5e62"/><rect x="416" y="4" width="1" height="1" fill="#5e5e62"/><rect x="418" y="0" width="1" height="1" fill="#5e5e62"/><rect x="419" y="2" width="1" height="1" fill="#5e5e62"/><rect x="418" y="4" width="1" height="1" fill="#5e5e62"/><rect x="420" y="0" width="1" height="1" fill="#5e5e62"/><rect x="421" y="2" width="1" height="1" fill="#5e5e62"/><rect x="420" y="4" width="1" height="1" fill="#5e5e62"/><rect x="422" y="0" width="1" height="1" fill="#5e5e62"/><rect x="423" y="2" width="1" height="1" fill="#5e5e62"/><rect x="422" y="4" width="1" height="1" fill="#5e5e62"/><rect x="424" y="0" width="1" height="1" fill="#5e5e62"/><rect x="425" y="2" width="1" height="1" fill="#5e5e62"/><rect x="424" y="4" width="1" height="1" fill="#5e5e62"/><rect x="426" y="0" width="1" height="1" fill="#5e5e62"/><rect x="427" y="2" width="1" height="1" fill="#5e5e62"/><rect x="426" y="4" width="1" height="1" fill="#5e5e62"/><rect x="428" y="0" width="1" height="1" fill="#5e5e62"/><rect x="429" y="2" width="1" height="1" fill="#5e5e62"/><rect x="428" y="4" width="1" height="1" fill="#5e5e62"/><rect x="430" y="0" width="1" height="1" fill="#5e5e62"/><rect x="431" y="2" width="1" height="1" fill="#5e5e62"/><rect x="430" y="4" width="1" height="1" fill="#5e5e62"/><rect x="432" y="0" width="1" height="1" fill="#5e5e62"/><rect x="433" y="2" width="1" height="1" fill="#5e5e62"/><rect x="432" y="4" width="1" height="1" fill="#5e5e62"/><rect x="434" y="0" width="1" height="1" fill="#5e5e62"/><rect x="435" y="2" width="1" height="1" fill="#5e5e62"/><rect x="434" y="4" width="1" height="1" fill="#5e5e62"/><rect x="436" y="0" width="1" height="1" fill="#5e5e62"/><rect x="437" y="2" width="1" height="1" fill="#5e5e62"/><rect x="436" y="4" width="1" height="1" fill="#5e5e62"/><rect x="438" y="0" width="1" height="1" fill="#5e5e62"/><rect x="439" y="2" width="1" height="1" fill="#5e5e62"/><rect x="438" y="4" width="1" height="1" fill="#5e5e62"/><rect x="440" y="0" width="1" height="1" fill="#5e5e62"/><rect x="441" y="2" width="1" height="1" fill="#5e5e62"/><rect x="440" y="4" width="1" height="1" fill="#5e5e62"/><rect x="442" y="0" width="1" height="1" fill="#5e5e62"/><rect x="443" y="2" width="1" height="1" fill="#5e5e62"/><rect x="442" y="4" width="1" height="1" fill="#5e5e62"/><rect x="444" y="0" width="1" height="1" fill="#5e5e62"/><rect x="445" y="2" width="1" height="1" fill="#5e5e62"/><rect x="444" y="4" width="1" height="1" fill="#5e5e62"/><rect x="446" y="0" width="1" height="1" fill="#5e5e62"/><rect x="447" y="2" width="1" height="1" fill="#5e5e62"/><rect x="446" y="4" width="1" height="1" fill="#5e5e62"/><rect x="448" y="0" width="1" height="1" fill="#5e5e62"/><rect x="449" y="2" width="1" height="1" fill="#5e5e62"/><rect x="448" y="4" width="1" height="1" fill="#5e5e62"/><rect x="450" y="0" width="1" height="1" fill="#5e5e62"/><rect x="451" y="2" width="1" height="1" fill="#5e5e62"/><rect x="450" y="4" width="1" height="1" fill="#5e5e62"/><rect x="452" y="0" width="1" height="1" fill="#5e5e62"/><rect x="453" y="2" width="1" height="1" fill="#5e5e62"/><rect x="452" y="4" width="1" height="1" fill="#5e5e62"/><rect x="454" y="0" width="1" height="1" fill="#5e5e62"/><rect x="455" y="2" width="1" height="1" fill="#5e5e62"/><rect x="454" y="4" width="1" height="1" fill="#5e5e62"/><rect x="456" y="0" width="1" height="1" fill="#5e5e62"/><rect x="457" y="2" width="1" height="1" fill="#5e5e62"/><rect x="456" y="4" width="1" height="1" fill="#5e5e62"/><rect x="458" y="0" width="1" height="1" fill="#5e5e62"/><rect x="459" y="2" width="1" height="1" fill="#5e5e62"/><rect x="458" y="4" width="1" height="1" fill="#5e5e62"/><rect x="460" y="0" width="1" height="1" fill="#5e5e62"/><rect x="461" y="2" width="1" height="1" fill="#5e5e62"/><rect x="460" y="4" width="1" height="1" fill="#5e5e62"/><rect x="462" y="0" width="1" height="1" fill="#5e5e62"/><rect x="463" y="2" width="1" height="1" fill="#5e5e62"/><rect x="462" y="4" width="1" height="1" fill="#5e5e62"/><rect x="464" y="0" width="1" height="1" fill="#5e5e62"/><rect x="465" y="2" width="1" height="1" fill="#5e5e62"/><rect x="464" y="4" width="1" height="1" fill="#5e5e62"/><rect x="466" y="0" width="1" height="1" fill="#5e5e62"/><rect x="467" y="2" width="1" height="1" fill="#5e5e62"/><rect x="466" y="4" width="1" height="1" fill="#5e5e62"/><rect x="468" y="0" width="1" height="1" fill="#5e5e62"/><rect x="469" y="2" width="1" height="1" fill="#5e5e62"/><rect x="468" y="4" width="1" height="1" fill="#5e5e62"/><rect x="470" y="0" width="1" height="1" fill="#5e5e62"/><rect x="471" y="2" width="1" height="1" fill="#5e5e62"/><rect x="470" y="4" width="1" height="1" fill="#5e5e62"/><rect x="472" y="0" width="1" height="1" fill="#5e5e62"/><rect x="473" y="2" width="1" height="1" fill="#5e5e62"/><rect x="472" y="4" width="1" height="1" fill="#5e5e62"/><rect x="474" y="0" width="1" height="1" fill="#5e5e62"/><rect x="475" y="2" width="1" height="1" fill="#5e5e62"/><rect x="474" y="4" width="1" height="1" fill="#5e5e62"/><rect x="476" y="0" width="1" height="1" fill="#5e5e62"/><rect x="477" y="2" width="1" height="1" fill="#5e5e62"/><rect x="476" y="4" width="1" height="1" fill="#5e5e62"/><rect x="478" y="0" width="1" height="1" fill="#5e5e62"/><rect x="479" y="2" width="1" height="1" fill="#5e5e62"/><rect x="478" y="4" width="1" height="1" fill="#5e5e62"/><rect x="480" y="0" width="1" height="1" fill="#5e5e62"/><rect x="481" y="2" width="1" height="1" fill="#5e5e62"/><rect x="480" y="4" width="1" height="1" fill="#5e5e62"/><rect x="482" y="0" width="1" height="1" fill="#5e5e62"/><rect x="483" y="2" width="1" height="1" fill="#5e5e62"/><rect x="482" y="4" width="1" height="1" fill="#5e5e62"/><rect x="484" y="0" width="1" height="1" fill="#5e5e62"/><rect x="485" y="2" width="1" height="1" fill="#5e5e62"/><rect x="484" y="4" width="1" height="1" fill="#5e5e62"/><rect x="486" y="0" width="1" height="1" fill="#5e5e62"/><rect x="487" y="2" width="1" height="1" fill="#5e5e62"/><rect x="486" y="4" width="1" height="1" fill="#5e5e62"/><rect x="488" y="0" width="1" height="1" fill="#5e5e62"/><rect x="489" y="2" width="1" height="1" fill="#5e5e62"/><rect x="488" y="4" width="1" height="1" fill="#5e5e62"/><rect x="490" y="0" width="1" height="1" fill="#5e5e62"/><rect x="491" y="2" width="1" height="1" fill="#5e5e62"/><rect x="490" y="4" width="1" height="1" fill="#5e5e62"/><rect x="492" y="0" width="1" height="1" fill="#5e5e62"/><rect x="493" y="2" width="1" height="1" fill="#5e5e62"/><rect x="492" y="4" width="1" height="1" fill="#5e5e62"/><rect x="494" y="0" width="1" height="1" fill="#5e5e62"/><rect x="495" y="2" width="1" height="1" fill="#5e5e62"/><rect x="494" y="4" width="1" height="1" fill="#5e5e62"/><rect x="496" y="0" width="1" height="1" fill="#5e5e62"/><rect x="497" y="2" width="1" height="1" fill="#5e5e62"/><rect x="496" y="4" width="1" height="1" fill="#5e5e62"/><rect x="498" y="0" width="1" height="1" fill="#5e5e62"/><rect x="499" y="2" width="1" height="1" fill="#5e5e62"/><rect x="498" y="4" width="1" height="1" fill="#5e5e62"/><rect x="500" y="0" width="1" height="1" fill="#5e5e62"/><rect x="501" y="2" width="1" height="1" fill="#5e5e62"/><rect x="500" y="4" width="1" height="1" fill="#5e5e62"/><rect x="502" y="0" width="1" height="1" fill="#5e5e62"/><rect x="503" y="2" width="1" height="1" fill="#5e5e62"/><rect x="502" y="4" width="1" height="1" fill="#5e5e62"/><rect x="504" y="0" width="1" height="1" fill="#5e5e62"/><rect x="505" y="2" width="1" height="1" fill="#5e5e62"/><rect x="504" y="4" width="1" height="1" fill="#5e5e62"/><rect x="506" y="0" width="1" height="1" fill="#5e5e62"/><rect x="507" y="2" width="1" height="1" fill="#5e5e62"/><rect x="506" y="4" width="1" height="1" fill="#5e5e62"/><rect x="508" y="0" width="1" height="1" fill="#5e5e62"/><rect x="509" y="2" width="1" height="1" fill="#5e5e62"/><rect x="508" y="4" width="1" height="1" fill="#5e5e62"/><rect x="510" y="0" width="1" height="1" fill="#5e5e62"/><rect x="511" y="2" width="1" height="1" fill="#5e5e62"/><rect x="510" y="4" width="1" height="1" fill="#5e5e62"/><rect x="512" y="0" width="1" height="1" fill="#5e5e62"/><rect x="513" y="2" width="1" height="1" fill="#5e5e62"/><rect x="512" y="4" width="1" height="1" fill="#5e5e62"/><rect x="514" y="0" width="1" height="1" fill="#5e5e62"/><rect x="515" y="2" width="1" height="1" fill="#5e5e62"/><rect x="514" y="4" width="1" height="1" fill="#5e5e62"/><rect x="516" y="0" width="1" height="1" fill="#5e5e62"/><rect x="517" y="2" width="1" height="1" fill="#5e5e62"/><rect x="516" y="4" width="1" height="1" fill="#5e5e62"/><rect x="518" y="0" width="1" height="1" fill="#5e5e62"/><rect x="519" y="2" width="1" height="1" fill="#5e5e62"/><rect x="518" y="4" width="1" height="1" fill="#5e5e62"/><rect x="520" y="0" width="1" height="1" fill="#5e5e62"/><rect x="521" y="2" width="1" height="1" fill="#5e5e62"/><rect x="520" y="4" width="1" height="1" fill="#5e5e62"/><rect x="522" y="0" width="1" height="1" fill="#5e5e62"/><rect x="523" y="2" width="1" height="1" fill="#5e5e62"/><rect x="522" y="4" width="1" height="1" fill="#5e5e62"/><rect x="524" y="0" width="1" height="1" fill="#5e5e62"/><rect x="525" y="2" width="1" height="1" fill="#5e5e62"/><rect x="524" y="4" width="1" height="1" fill="#5e5e62"/><rect x="526" y="0" width="1" height="1" fill="#5e5e62"/><rect x="527" y="2" width="1" height="1" fill="#5e5e62"/><rect x="526" y="4" width="1" height="1" fill="#5e5e62"/><rect x="528" y="0" width="1" height="1" fill="#5e5e62"/><rect x="529" y="2" width="1" height="1" fill="#5e5e62"/><rect x="528" y="4" width="1" height="1" fill="#5e5e62"/><rect x="530" y="0" width="1" height="1" fill="#5e5e62"/><rect x="531" y="2" width="1" height="1" fill="#5e5e62"/><rect x="530" y="4" width="1" height="1" fill="#5e5e62"/><rect x="532" y="0" width="1" height="1" fill="#5e5e62"/><rect x="533" y="2" width="1" height="1" fill="#5e5e62"/><rect x="532" y="4" width="1" height="1" fill="#5e5e62"/><rect x="534" y="0" width="1" height="1" fill="#5e5e62"/><rect x="535" y="2" width="1" height="1" fill="#5e5e62"/><rect x="534" y="4" width="1" height="1" fill="#5e5e62"/><rect x="536" y="0" width="1" height="1" fill="#5e5e62"/><rect x="537" y="2" width="1" height="1" fill="#5e5e62"/><rect x="536" y="4" width="1" height="1" fill="#5e5e62"/><rect x="538" y="0" width="1" height="1" fill="#5e5e62"/><rect x="539" y="2" width="1" height="1" fill="#5e5e62"/><rect x="538" y="4" width="1" height="1" fill="#5e5e62"/><rect x="540" y="0" width="1" height="1" fill="#5e5e62"/><rect x="541" y="2" width="1" height="1" fill="#5e5e62"/><rect x="540" y="4" width="1" height="1" fill="#5e5e62"/><rect x="542" y="0" width="1" height="1" fill="#5e5e62"/><rect x="543" y="2" width="1" height="1" fill="#5e5e62"/><rect x="542" y="4" width="1" height="1" fill="#5e5e62"/><rect x="544" y="0" width="1" height="1" fill="#5e5e62"/><rect x="545" y="2" width="1" height="1" fill="#5e5e62"/><rect x="544" y="4" width="1" height="1" fill="#5e5e62"/><rect x="546" y="0" width="1" height="1" fill="#5e5e62"/><rect x="547" y="2" width="1" height="1" fill="#5e5e62"/><rect x="546" y="4" width="1" height="1" fill="#5e5e62"/><rect x="548" y="0" width="1" height="1" fill="#5e5e62"/><rect x="549" y="2" width="1" height="1" fill="#5e5e62"/><rect x="548" y="4" width="1" height="1" fill="#5e5e62"/><rect x="550" y="0" width="1" height="1" fill="#5e5e62"/><rect x="551" y="2" width="1" height="1" fill="#5e5e62"/><rect x="550" y="4" width="1" height="1" fill="#5e5e62"/><rect x="552" y="0" width="1" height="1" fill="#5e5e62"/><rect x="553" y="2" width="1" height="1" fill="#5e5e62"/><rect x="552" y="4" width="1" height="1" fill="#5e5e62"/><rect x="554" y="0" width="1" height="1" fill="#5e5e62"/><rect x="555" y="2" width="1" height="1" fill="#5e5e62"/><rect x="554" y="4" width="1" height="1" fill="#5e5e62"/><rect x="556" y="0" width="1" height="1" fill="#5e5e62"/><rect x="557" y="2" width="1" height="1" fill="#5e5e62"/><rect x="556" y="4" width="1" height="1" fill="#5e5e62"/><rect x="558" y="0" width="1" height="1" fill="#5e5e62"/><rect x="559" y="2" width="1" height="1" fill="#5e5e62"/><rect x="558" y="4" width="1" height="1" fill="#5e5e62"/><rect x="560" y="0" width="1" height="1" fill="#5e5e62"/><rect x="561" y="2" width="1" height="1" fill="#5e5e62"/><rect x="560" y="4" width="1" height="1" fill="#5e5e62"/><rect x="562" y="0" width="1" height="1" fill="#5e5e62"/><rect x="563" y="2" width="1" height="1" fill="#5e5e62"/><rect x="562" y="4" width="1" height="1" fill="#5e5e62"/><rect x="564" y="0" width="1" height="1" fill="#5e5e62"/><rect x="565" y="2" width="1" height="1" fill="#5e5e62"/><rect x="564" y="4" width="1" height="1" fill="#5e5e62"/><rect x="566" y="0" width="1" height="1" fill="#5e5e62"/><rect x="567" y="2" width="1" height="1" fill="#5e5e62"/><rect x="566" y="4" width="1" height="1" fill="#5e5e62"/><rect x="568" y="0" width="1" height="1" fill="#5e5e62"/><rect x="569" y="2" width="1" height="1" fill="#5e5e62"/><rect x="568" y="4" width="1" height="1" fill="#5e5e62"/><rect x="570" y="0" width="1" height="1" fill="#5e5e62"/><rect x="571" y="2" width="1" height="1" fill="#5e5e62"/><rect x="570" y="4" width="1" height="1" fill="#5e5e62"/><rect x="572" y="0" width="1" height="1" fill="#5e5e62"/><rect x="573" y="2" width="1" height="1" fill="#5e5e62"/><rect x="572" y="4" width="1" height="1" fill="#5e5e62"/><rect x="574" y="0" width="1" height="1" fill="#5e5e62"/><rect x="575" y="2" width="1" height="1" fill="#5e5e62"/><rect x="574" y="4" width="1" height="1" fill="#5e5e62"/><rect x="576" y="0" width="1" height="1" fill="#5e5e62"/><rect x="577" y="2" width="1" height="1" fill="#5e5e62"/><rect x="576" y="4" width="1" height="1" fill="#5e5e62"/><rect x="578" y="0" width="1" height="1" fill="#5e5e62"/><rect x="579" y="2" width="1" height="1" fill="#5e5e62"/><rect x="578" y="4" width="1" height="1" fill="#5e5e62"/><rect x="580" y="0" width="1" height="1" fill="#5e5e62"/><rect x="581" y="2" width="1" height="1" fill="#5e5e62"/><rect x="580" y="4" width="1" height="1" fill="#5e5e62"/><rect x="582" y="0" width="1" height="1" fill="#5e5e62"/><rect x="583" y="2" width="1" height="1" fill="#5e5e62"/><rect x="582" y="4" width="1" height="1" fill="#5e5e62"/><rect x="584" y="0" width="1" height="1" fill="#5e5e62"/><rect x="585" y="2" width="1" height="1" fill="#5e5e62"/><rect x="584" y="4" width="1" height="1" fill="#5e5e62"/><rect x="586" y="0" width="1" height="1" fill="#5e5e62"/><rect x="587" y="2" width="1" height="1" fill="#5e5e62"/><rect x="586" y="4" width="1" height="1" fill="#5e5e62"/><rect x="588" y="0" width="1" height="1" fill="#5e5e62"/><rect x="589" y="2" width="1" height="1" fill="#5e5e62"/><rect x="588" y="4" width="1" height="1" fill="#5e5e62"/><rect x="590" y="0" width="1" height="1" fill="#5e5e62"/><rect x="591" y="2" width="1" height="1" fill="#5e5e62"/><rect x="590" y="4" width="1" height="1" fill="#5e5e62"/><rect x="592" y="0" width="1" height="1" fill="#5e5e62"/><rect x="593" y="2" width="1" height="1" fill="#5e5e62"/><rect x="592" y="4" width="1" height="1" fill="#5e5e62"/><rect x="594" y="0" width="1" height="1" fill="#5e5e62"/><rect x="595" y="2" width="1" height="1" fill="#5e5e62"/><rect x="594" y="4" width="1" height="1" fill="#5e5e62"/><rect x="596" y="0" width="1" height="1" fill="#5e5e62"/><rect x="597" y="2" width="1" height="1" fill="#5e5e62"/><rect x="596" y="4" width="1" height="1" fill="#5e5e62"/><rect x="598" y="0" width="1" height="1" fill="#5e5e62"/><rect x="599" y="2" width="1" height="1" fill="#5e5e62"/><rect x="598" y="4" width="1" height="1" fill="#5e5e62"/><rect x="600" y="0" width="1" height="1" fill="#5e5e62"/><rect x="601" y="2" width="1" height="1" fill="#5e5e62"/><rect x="600" y="4" width="1" height="1" fill="#5e5e62"/><rect x="602" y="0" width="1" height="1" fill="#5e5e62"/><rect x="603" y="2" width="1" height="1" fill="#5e5e62"/><rect x="602" y="4" width="1" height="1" fill="#5e5e62"/><rect x="604" y="0" width="1" height="1" fill="#5e5e62"/><rect x="605" y="2" width="1" height="1" fill="#5e5e62"/><rect x="604" y="4" width="1" height="1" fill="#5e5e62"/><rect x="606" y="0" width="1" height="1" fill="#5e5e62"/><rect x="607" y="2" width="1" height="1" fill="#5e5e62"/><rect x="606" y="4" width="1" height="1" fill="#5e5e62"/><rect x="608" y="0" width="1" height="1" fill="#5e5e62"/><rect x="609" y="2" width="1" height="1" fill="#5e5e62"/><rect x="608" y="4" width="1" height="1" fill="#5e5e62"/><rect x="610" y="0" width="1" height="1" fill="#5e5e62"/><rect x="611" y="2" width="1" height="1" fill="#5e5e62"/><rect x="610" y="4" width="1" height="1" fill="#5e5e62"/><rect x="612" y="0" width="1" height="1" fill="#5e5e62"/><rect x="613" y="2" width="1" height="1" fill="#5e5e62"/><rect x="612" y="4" width="1" height="1" fill="#5e5e62"/><rect x="614" y="0" width="1" height="1" fill="#5e5e62"/><rect x="615" y="2" width="1" height="1" fill="#5e5e62"/><rect x="614" y="4" width="1" height="1" fill="#5e5e62"/><rect x="616" y="0" width="1" height="1" fill="#5e5e62"/><rect x="617" y="2" width="1" height="1" fill="#5e5e62"/><rect x="616" y="4" width="1" height="1" fill="#5e5e62"/><rect x="618" y="0" width="1" height="1" fill="#5e5e62"/><rect x="619" y="2" width="1" height="1" fill="#5e5e62"/><rect x="618" y="4" width="1" height="1" fill="#5e5e62"/><rect x="620" y="0" width="1" height="1" fill="#5e5e62"/><rect x="621" y="2" width="1" height="1" fill="#5e5e62"/><rect x="620" y="4" width="1" height="1" fill="#5e5e62"/><rect x="622" y="0" width="1" height="1" fill="#5e5e62"/><rect x="623" y="2" width="1" height="1" fill="#5e5e62"/><rect x="622" y="4" width="1" height="1" fill="#5e5e62"/><rect x="624" y="0" width="1" height="1" fill="#5e5e62"/><rect x="625" y="2" width="1" height="1" fill="#5e5e62"/><rect x="624" y="4" width="1" height="1" fill="#5e5e62"/><rect x="626" y="0" width="1" height="1" fill="#5e5e62"/><rect x="627" y="2" width="1" height="1" fill="#5e5e62"/><rect x="626" y="4" width="1" height="1" fill="#5e5e62"/><rect x="628" y="0" width="1" height="1" fill="#5e5e62"/><rect x="629" y="2" width="1" height="1" fill="#5e5e62"/><rect x="628" y="4" width="1" height="1" fill="#5e5e62"/><rect x="630" y="0" width="1" height="1" fill="#5e5e62"/><rect x="631" y="2" width="1" height="1" fill="#5e5e62"/><rect x="630" y="4" width="1" height="1" fill="#5e5e62"/><rect x="632" y="0" width="1" height="1" fill="#5e5e62"/><rect x="633" y="2" width="1" height="1" fill="#5e5e62"/><rect x="632" y="4" width="1" height="1" fill="#5e5e62"/><rect x="634" y="0" width="1" height="1" fill="#5e5e62"/><rect x="635" y="2" width="1" height="1" fill="#5e5e62"/><rect x="634" y="4" width="1" height="1" fill="#5e5e62"/><rect x="636" y="0" width="1" height="1" fill="#5e5e62"/><rect x="637" y="2" width="1" height="1" fill="#5e5e62"/><rect x="636" y="4" width="1" height="1" fill="#5e5e62"/><rect x="638" y="0" width="1" height="1" fill="#5e5e62"/><rect x="639" y="2" width="1" height="1" fill="#5e5e62"/><rect x="638" y="4" width="1" height="1" fill="#5e5e62"/><rect x="640" y="0" width="1" height="1" fill="#5e5e62"/><rect x="641" y="2" width="1" height="1" fill="#5e5e62"/><rect x="640" y="4" width="1" height="1" fill="#5e5e62"/><rect x="642" y="0" width="1" height="1" fill="#5e5e62"/><rect x="643" y="2" width="1" height="1" fill="#5e5e62"/><rect x="642" y="4" width="1" height="1" fill="#5e5e62"/><rect x="644" y="0" width="1" height="1" fill="#5e5e62"/><rect x="645" y="2" width="1" height="1" fill="#5e5e62"/><rect x="644" y="4" width="1" height="1" fill="#5e5e62"/><rect x="646" y="0" width="1" height="1" fill="#5e5e62"/><rect x="647" y="2" width="1" height="1" fill="#5e5e62"/><rect x="646" y="4" width="1" height="1" fill="#5e5e62"/><rect x="648" y="0" width="1" height="1" fill="#5e5e62"/><rect x="649" y="2" width="1" height="1" fill="#5e5e62"/><rect x="648" y="4" width="1" height="1" fill="#5e5e62"/><rect x="650" y="0" width="1" height="1" fill="#5e5e62"/><rect x="651" y="2" width="1" height="1" fill="#5e5e62"/><rect x="650" y="4" width="1" height="1" fill="#5e5e62"/><rect x="652" y="0" width="1" height="1" fill="#5e5e62"/><rect x="653" y="2" width="1" height="1" fill="#5e5e62"/><rect x="652" y="4" width="1" height="1" fill="#5e5e62"/><rect x="654" y="0" width="1" height="1" fill="#5e5e62"/><rect x="655" y="2" width="1" height="1" fill="#5e5e62"/><rect x="654" y="4" width="1" height="1" fill="#5e5e62"/><rect x="656" y="0" width="1" height="1" fill="#5e5e62"/><rect x="657" y="2" width="1" height="1" fill="#5e5e62"/><rect x="656" y="4" width="1" height="1" fill="#5e5e62"/><rect x="658" y="0" width="1" height="1" fill="#5e5e62"/><rect x="659" y="2" width="1" height="1" fill="#5e5e62"/><rect x="658" y="4" width="1" height="1" fill="#5e5e62"/><rect x="660" y="0" width="1" height="1" fill="#5e5e62"/><rect x="661" y="2" width="1" height="1" fill="#5e5e62"/><rect x="660" y="4" width="1" height="1" fill="#5e5e62"/><rect x="662" y="0" width="1" height="1" fill="#5e5e62"/><rect x="663" y="2" width="1" height="1" fill="#5e5e62"/><rect x="662" y="4" width="1" height="1" fill="#5e5e62"/><rect x="664" y="0" width="1" height="1" fill="#5e5e62"/><rect x="665" y="2" width="1" height="1" fill="#5e5e62"/><rect x="664" y="4" width="1" height="1" fill="#5e5e62"/><rect x="666" y="0" width="1" height="1" fill="#5e5e62"/><rect x="667" y="2" width="1" height="1" fill="#5e5e62"/><rect x="666" y="4" width="1" height="1" fill="#5e5e62"/><rect x="668" y="0" width="1" height="1" fill="#5e5e62"/><rect x="669" y="2" width="1" height="1" fill="#5e5e62"/><rect x="668" y="4" width="1" height="1" fill="#5e5e62"/><rect x="670" y="0" width="1" height="1" fill="#5e5e62"/><rect x="671" y="2" width="1" height="1" fill="#5e5e62"/><rect x="670" y="4" width="1" height="1" fill="#5e5e62"/><rect x="672" y="0" width="1" height="1" fill="#5e5e62"/><rect x="673" y="2" width="1" height="1" fill="#5e5e62"/><rect x="672" y="4" width="1" height="1" fill="#5e5e62"/><rect x="674" y="0" width="1" height="1" fill="#5e5e62"/><rect x="675" y="2" width="1" height="1" fill="#5e5e62"/><rect x="674" y="4" width="1" height="1" fill="#5e5e62"/><rect x="676" y="0" width="1" height="1" fill="#5e5e62"/><rect x="677" y="2" width="1" height="1" fill="#5e5e62"/><rect x="676" y="4" width="1" height="1" fill="#5e5e62"/><rect x="678" y="0" width="1" height="1" fill="#5e5e62"/><rect x="679" y="2" width="1" height="1" fill="#5e5e62"/><rect x="678" y="4" width="1" height="1" fill="#5e5e62"/><rect x="680" y="0" width="1" height="1" fill="#5e5e62"/><rect x="681" y="2" width="1" height="1" fill="#5e5e62"/><rect x="680" y="4" width="1" height="1" fill="#5e5e62"/><rect x="682" y="0" width="1" height="1" fill="#5e5e62"/><rect x="683" y="2" width="1" height="1" fill="#5e5e62"/><rect x="682" y="4" width="1" height="1" fill="#5e5e62"/><rect x="684" y="0" width="1" height="1" fill="#5e5e62"/><rect x="685" y="2" width="1" height="1" fill="#5e5e62"/><rect x="684" y="4" width="1" height="1" fill="#5e5e62"/><rect x="686" y="0" width="1" height="1" fill="#5e5e62"/><rect x="687" y="2" width="1" height="1" fill="#5e5e62"/><rect x="686" y="4" width="1" height="1" fill="#5e5e62"/><rect x="688" y="0" width="1" height="1" fill="#5e5e62"/><rect x="689" y="2" width="1" height="1" fill="#5e5e62"/><rect x="688" y="4" width="1" height="1" fill="#5e5e62"/><rect x="690" y="0" width="1" height="1" fill="#5e5e62"/><rect x="691" y="2" width="1" height="1" fill="#5e5e62"/><rect x="690" y="4" width="1" height="1" fill="#5e5e62"/><rect x="692" y="0" width="1" height="1" fill="#5e5e62"/><rect x="693" y="2" width="1" height="1" fill="#5e5e62"/><rect x="692" y="4" width="1" height="1" fill="#5e5e62"/><rect x="694" y="0" width="1" height="1" fill="#5e5e62"/><rect x="695" y="2" width="1" height="1" fill="#5e5e62"/><rect x="694" y="4" width="1" height="1" fill="#5e5e62"/><rect x="696" y="0" width="1" height="1" fill="#5e5e62"/><rect x="697" y="2" width="1" height="1" fill="#5e5e62"/><rect x="696" y="4" width="1" height="1" fill="#5e5e62"/><rect x="698" y="0" width="1" height="1" fill="#5e5e62"/><rect x="699" y="2" width="1" height="1" fill="#5e5e62"/><rect x="698" y="4" width="1" height="1" fill="#5e5e62"/><rect x="700" y="0" width="1" height="1" fill="#5e5e62"/><rect x="701" y="2" width="1" height="1" fill="#5e5e62"/><rect x="700" y="4" width="1" height="1" fill="#5e5e62"/><rect x="702" y="0" width="1" height="1" fill="#5e5e62"/><rect x="703" y="2" width="1" height="1" fill="#5e5e62"/><rect x="702" y="4" width="1" height="1" fill="#5e5e62"/><rect x="704" y="0" width="1" height="1" fill="#5e5e62"/><rect x="705" y="2" width="1" height="1" fill="#5e5e62"/><rect x="704" y="4" width="1" height="1" fill="#5e5e62"/><rect x="706" y="0" width="1" height="1" fill="#5e5e62"/><rect x="707" y="2" width="1" height="1" fill="#5e5e62"/><rect x="706" y="4" width="1" height="1" fill="#5e5e62"/><rect x="708" y="0" width="1" height="1" fill="#5e5e62"/><rect x="709" y="2" width="1" height="1" fill="#5e5e62"/><rect x="708" y="4" width="1" height="1" fill="#5e5e62"/><rect x="710" y="0" width="1" height="1" fill="#5e5e62"/><rect x="711" y="2" width="1" height="1" fill="#5e5e62"/><rect x="710" y="4" width="1" height="1" fill="#5e5e62"/><rect x="712" y="0" width="1" height="1" fill="#5e5e62"/><rect x="713" y="2" width="1" height="1" fill="#5e5e62"/><rect x="712" y="4" width="1" height="1" fill="#5e5e62"/><rect x="714" y="0" width="1" height="1" fill="#5e5e62"/><rect x="715" y="2" width="1" height="1" fill="#5e5e62"/><rect x="714" y="4" width="1" height="1" fill="#5e5e62"/><rect x="716" y="0" width="1" height="1" fill="#5e5e62"/><rect x="717" y="2" width="1" height="1" fill="#5e5e62"/><rect x="716" y="4" width="1" height="1" fill="#5e5e62"/><rect x="718" y="0" width="1" height="1" fill="#5e5e62"/><rect x="719" y="2" width="1" height="1" fill="#5e5e62"/><rect x="718" y="4" width="1" height="1" fill="#5e5e62"/><rect x="720" y="0" width="1" height="1" fill="#5e5e62"/><rect x="721" y="2" width="1" height="1" fill="#5e5e62"/><rect x="720" y="4" width="1" height="1" fill="#5e5e62"/><rect x="722" y="0" width="1" height="1" fill="#5e5e62"/><rect x="723" y="2" width="1" height="1" fill="#5e5e62"/><rect x="722" y="4" width="1" height="1" fill="#5e5e62"/><rect x="724" y="0" width="1" height="1" fill="#5e5e62"/><rect x="725" y="2" width="1" height="1" fill="#5e5e62"/><rect x="724" y="4" width="1" height="1" fill="#5e5e62"/><rect x="726" y="0" width="1" height="1" fill="#5e5e62"/><rect x="727" y="2" width="1" height="1" fill="#5e5e62"/><rect x="726" y="4" width="1" height="1" fill="#5e5e62"/><rect x="728" y="0" width="1" height="1" fill="#5e5e62"/><rect x="729" y="2" width="1" height="1" fill="#5e5e62"/><rect x="728" y="4" width="1" height="1" fill="#5e5e62"/><rect x="730" y="0" width="1" height="1" fill="#5e5e62"/><rect x="731" y="2" width="1" height="1" fill="#5e5e62"/><rect x="730" y="4" width="1" height="1" fill="#5e5e62"/><rect x="732" y="0" width="1" height="1" fill="#5e5e62"/><rect x="733" y="2" width="1" height="1" fill="#5e5e62"/><rect x="732" y="4" width="1" height="1" fill="#5e5e62"/><rect x="734" y="0" width="1" height="1" fill="#5e5e62"/><rect x="735" y="2" width="1" height="1" fill="#5e5e62"/><rect x="734" y="4" width="1" height="1" fill="#5e5e62"/><rect x="736" y="0" width="1" height="1" fill="#5e5e62"/><rect x="737" y="2" width="1" height="1" fill="#5e5e62"/><rect x="736" y="4" width="1" height="1" fill="#5e5e62"/><rect x="738" y="0" width="1" height="1" fill="#5e5e62"/><rect x="739" y="2" width="1" height="1" fill="#5e5e62"/><rect x="738" y="4" width="1" height="1" fill="#5e5e62"/><rect x="740" y="0" width="1" height="1" fill="#5e5e62"/><rect x="741" y="2" width="1" height="1" fill="#5e5e62"/><rect x="740" y="4" width="1" height="1" fill="#5e5e62"/><rect x="742" y="0" width="1" height="1" fill="#5e5e62"/><rect x="743" y="2" width="1" height="1" fill="#5e5e62"/><rect x="742" y="4" width="1" height="1" fill="#5e5e62"/><rect x="744" y="0" width="1" height="1" fill="#5e5e62"/><rect x="745" y="2" width="1" height="1" fill="#5e5e62"/><rect x="744" y="4" width="1" height="1" fill="#5e5e62"/><rect x="746" y="0" width="1" height="1" fill="#5e5e62"/><rect x="747" y="2" width="1" height="1" fill="#5e5e62"/><rect x="746" y="4" width="1" height="1" fill="#5e5e62"/><rect x="748" y="0" width="1" height="1" fill="#5e5e62"/><rect x="749" y="2" width="1" height="1" fill="#5e5e62"/><rect x="748" y="4" width="1" height="1" fill="#5e5e62"/><rect x="750" y="0" width="1" height="1" fill="#5e5e62"/><rect x="751" y="2" width="1" height="1" fill="#5e5e62"/><rect x="750" y="4" width="1" height="1" fill="#5e5e62"/><rect x="752" y="0" width="1" height="1" fill="#5e5e62"/><rect x="753" y="2" width="1" height="1" fill="#5e5e62"/><rect x="752" y="4" width="1" height="1" fill="#5e5e62"/><rect x="754" y="0" width="1" height="1" fill="#5e5e62"/><rect x="755" y="2" width="1" height="1" fill="#5e5e62"/><rect x="754" y="4" width="1" height="1" fill="#5e5e62"/><rect x="756" y="0" width="1" height="1" fill="#5e5e62"/><rect x="757" y="2" width="1" height="1" fill="#5e5e62"/><rect x="756" y="4" width="1" height="1" fill="#5e5e62"/><rect x="758" y="0" width="1" height="1" fill="#5e5e62"/><rect x="759" y="2" width="1" height="1" fill="#5e5e62"/><rect x="758" y="4" width="1" height="1" fill="#5e5e62"/><rect x="760" y="0" width="1" height="1" fill="#5e5e62"/><rect x="761" y="2" width="1" height="1" fill="#5e5e62"/><rect x="760" y="4" width="1" height="1" fill="#5e5e62"/><rect x="762" y="0" width="1" height="1" fill="#5e5e62"/><rect x="763" y="2" width="1" height="1" fill="#5e5e62"/><rect x="762" y="4" width="1" height="1" fill="#5e5e62"/><rect x="764" y="0" width="1" height="1" fill="#5e5e62"/><rect x="765" y="2" width="1" height="1" fill="#5e5e62"/><rect x="764" y="4" width="1" height="1" fill="#5e5e62"/><rect x="766" y="0" width="1" height="1" fill="#5e5e62"/><rect x="767" y="2" width="1" height="1" fill="#5e5e62"/><rect x="766" y="4" width="1" height="1" fill="#5e5e62"/><rect x="768" y="0" width="1" height="1" fill="#5e5e62"/><rect x="769" y="2" width="1" height="1" fill="#5e5e62"/><rect x="768" y="4" width="1" height="1" fill="#5e5e62"/><rect x="770" y="0" width="1" height="1" fill="#5e5e62"/><rect x="771" y="2" width="1" height="1" fill="#5e5e62"/><rect x="770" y="4" width="1" height="1" fill="#5e5e62"/><rect x="772" y="0" width="1" height="1" fill="#5e5e62"/><rect x="773" y="2" width="1" height="1" fill="#5e5e62"/><rect x="772" y="4" width="1" height="1" fill="#5e5e62"/><rect x="774" y="0" width="1" height="1" fill="#5e5e62"/><rect x="775" y="2" width="1" height="1" fill="#5e5e62"/><rect x="774" y="4" width="1" height="1" fill="#5e5e62"/><rect x="776" y="0" width="1" height="1" fill="#5e5e62"/><rect x="777" y="2" width="1" height="1" fill="#5e5e62"/><rect x="776" y="4" width="1" height="1" fill="#5e5e62"/><rect x="778" y="0" width="1" height="1" fill="#5e5e62"/><rect x="779" y="2" width="1" height="1" fill="#5e5e62"/><rect x="778" y="4" width="1" height="1" fill="#5e5e62"/><rect x="780" y="0" width="1" height="1" fill="#5e5e62"/><rect x="781" y="2" width="1" height="1" fill="#5e5e62"/><rect x="780" y="4" width="1" height="1" fill="#5e5e62"/><rect x="782" y="0" width="1" height="1" fill="#5e5e62"/><rect x="783" y="2" width="1" height="1" fill="#5e5e62"/><rect x="782" y="4" width="1" height="1" fill="#5e5e62"/><rect x="784" y="0" width="1" height="1" fill="#5e5e62"/><rect x="785" y="2" width="1" height="1" fill="#5e5e62"/><rect x="784" y="4" width="1" height="1" fill="#5e5e62"/><rect x="786" y="0" width="1" height="1" fill="#5e5e62"/><rect x="787" y="2" width="1" height="1" fill="#5e5e62"/><rect x="786" y="4" width="1" height="1" fill="#5e5e62"/><rect x="788" y="0" width="1" height="1" fill="#5e5e62"/><rect x="789" y="2" width="1" height="1" fill="#5e5e62"/><rect x="788" y="4" width="1" height="1" fill="#5e5e62"/><rect x="790" y="0" width="1" height="1" fill="#5e5e62"/><rect x="791" y="2" width="1" height="1" fill="#5e5e62"/><rect x="790" y="4" width="1" height="1" fill="#5e5e62"/><rect x="792" y="0" width="1" height="1" fill="#5e5e62"/><rect x="793" y="2" width="1" height="1" fill="#5e5e62"/><rect x="792" y="4" width="1" height="1" fill="#5e5e62"/><rect x="794" y="0" width="1" height="1" fill="#5e5e62"/><rect x="795" y="2" width="1" height="1" fill="#5e5e62"/><rect x="794" y="4" width="1" height="1" fill="#5e5e62"/><rect x="796" y="0" width="1" height="1" fill="#5e5e62"/><rect x="797" y="2" width="1" height="1" fill="#5e5e62"/><rect x="796" y="4" width="1" height="1" fill="#5e5e62"/><rect x="798" y="0" width="1" height="1" fill="#5e5e62"/><rect x="799" y="2" width="1" height="1" fill="#5e5e62"/><rect x="798" y="4" width="1" height="1" fill="#5e5e62"/><rect x="800" y="0" width="1" height="1" fill="#5e5e62"/><rect x="801" y="2" width="1" height="1" fill="#5e5e62"/><rect x="800" y="4" width="1" height="1" fill="#5e5e62"/><rect x="802" y="0" width="1" height="1" fill="#5e5e62"/><rect x="803" y="2" width="1" height="1" fill="#5e5e62"/><rect x="802" y="4" width="1" height="1" fill="#5e5e62"/><rect x="804" y="0" width="1" height="1" fill="#5e5e62"/><rect x="805" y="2" width="1" height="1" fill="#5e5e62"/><rect x="804" y="4" width="1" height="1" fill="#5e5e62"/><rect x="806" y="0" width="1" height="1" fill="#5e5e62"/><rect x="807" y="2" width="1" height="1" fill="#5e5e62"/><rect x="806" y="4" width="1" height="1" fill="#5e5e62"/><rect x="808" y="0" width="1" height="1" fill="#5e5e62"/><rect x="809" y="2" width="1" height="1" fill="#5e5e62"/><rect x="808" y="4" width="1" height="1" fill="#5e5e62"/><rect x="810" y="0" width="1" height="1" fill="#5e5e62"/><rect x="811" y="2" width="1" height="1" fill="#5e5e62"/><rect x="810" y="4" width="1" height="1" fill="#5e5e62"/><rect x="812" y="0" width="1" height="1" fill="#5e5e62"/><rect x="813" y="2" width="1" height="1" fill="#5e5e62"/><rect x="812" y="4" width="1" height="1" fill="#5e5e62"/><rect x="814" y="0" width="1" height="1" fill="#5e5e62"/><rect x="815" y="2" width="1" height="1" fill="#5e5e62"/><rect x="814" y="4" width="1" height="1" fill="#5e5e62"/><rect x="816" y="0" width="1" height="1" fill="#5e5e62"/><rect x="817" y="2" width="1" height="1" fill="#5e5e62"/><rect x="816" y="4" width="1" height="1" fill="#5e5e62"/><rect x="818" y="0" width="1" height="1" fill="#5e5e62"/><rect x="819" y="2" width="1" height="1" fill="#5e5e62"/><rect x="818" y="4" width="1" height="1" fill="#5e5e62"/><rect x="820" y="0" width="1" height="1" fill="#5e5e62"/><rect x="821" y="2" width="1" height="1" fill="#5e5e62"/><rect x="820" y="4" width="1" height="1" fill="#5e5e62"/><rect x="822" y="0" width="1" height="1" fill="#5e5e62"/><rect x="823" y="2" width="1" height="1" fill="#5e5e62"/><rect x="822" y="4" width="1" height="1" fill="#5e5e62"/><rect x="824" y="0" width="1" height="1" fill="#5e5e62"/><rect x="825" y="2" width="1" height="1" fill="#5e5e62"/><rect x="824" y="4" width="1" height="1" fill="#5e5e62"/><rect x="826" y="0" width="1" height="1" fill="#5e5e62"/><rect x="827" y="2" width="1" height="1" fill="#5e5e62"/><rect x="826" y="4" width="1" height="1" fill="#5e5e62"/><rect x="828" y="0" width="1" height="1" fill="#5e5e62"/><rect x="829" y="2" width="1" height="1" fill="#5e5e62"/><rect x="828" y="4" width="1" height="1" fill="#5e5e62"/><rect x="830" y="0" width="1" height="1" fill="#5e5e62"/><rect x="831" y="2" width="1" height="1" fill="#5e5e62"/><rect x="830" y="4" width="1" height="1" fill="#5e5e62"/><rect x="832" y="0" width="1" height="1" fill="#5e5e62"/><rect x="833" y="2" width="1" height="1" fill="#5e5e62"/><rect x="832" y="4" width="1" height="1" fill="#5e5e62"/><rect x="834" y="0" width="1" height="1" fill="#5e5e62"/><rect x="835" y="2" width="1" height="1" fill="#5e5e62"/><rect x="834" y="4" width="1" height="1" fill="#5e5e62"/><rect x="836" y="0" width="1" height="1" fill="#5e5e62"/><rect x="837" y="2" width="1" height="1" fill="#5e5e62"/><rect x="836" y="4" width="1" height="1" fill="#5e5e62"/><rect x="838" y="0" width="1" height="1" fill="#5e5e62"/><rect x="839" y="2" width="1" height="1" fill="#5e5e62"/><rect x="838" y="4" width="1" height="1" fill="#5e5e62"/><rect x="840" y="0" width="1" height="1" fill="#5e5e62"/><rect x="841" y="2" width="1" height="1" fill="#5e5e62"/><rect x="840" y="4" width="1" height="1" fill="#5e5e62"/><rect x="842" y="0" width="1" height="1" fill="#5e5e62"/><rect x="843" y="2" width="1" height="1" fill="#5e5e62"/><rect x="842" y="4" width="1" height="1" fill="#5e5e62"/><rect x="844" y="0" width="1" height="1" fill="#5e5e62"/><rect x="845" y="2" width="1" height="1" fill="#5e5e62"/><rect x="844" y="4" width="1" height="1" fill="#5e5e62"/><rect x="846" y="0" width="1" height="1" fill="#5e5e62"/><rect x="847" y="2" width="1" height="1" fill="#5e5e62"/><rect x="846" y="4" width="1" height="1" fill="#5e5e62"/><rect x="848" y="0" width="1" height="1" fill="#5e5e62"/><rect x="849" y="2" width="1" height="1" fill="#5e5e62"/><rect x="848" y="4" width="1" height="1" fill="#5e5e62"/><rect x="850" y="0" width="1" height="1" fill="#5e5e62"/><rect x="851" y="2" width="1" height="1" fill="#5e5e62"/><rect x="850" y="4" width="1" height="1" fill="#5e5e62"/><rect x="852" y="0" width="1" height="1" fill="#5e5e62"/><rect x="853" y="2" width="1" height="1" fill="#5e5e62"/><rect x="852" y="4" width="1" height="1" fill="#5e5e62"/><rect x="854" y="0" width="1" height="1" fill="#5e5e62"/><rect x="855" y="2" width="1" height="1" fill="#5e5e62"/><rect x="854" y="4" width="1" height="1" fill="#5e5e62"/><rect x="856" y="0" width="1" height="1" fill="#5e5e62"/><rect x="857" y="2" width="1" height="1" fill="#5e5e62"/><rect x="856" y="4" width="1" height="1" fill="#5e5e62"/><rect x="858" y="0" width="1" height="1" fill="#5e5e62"/><rect x="859" y="2" width="1" height="1" fill="#5e5e62"/><rect x="858" y="4" width="1" height="1" fill="#5e5e62"/><rect x="860" y="0" width="1" height="1" fill="#5e5e62"/><rect x="861" y="2" width="1" height="1" fill="#5e5e62"/><rect x="860" y="4" width="1" height="1" fill="#5e5e62"/><rect x="862" y="0" width="1" height="1" fill="#5e5e62"/><rect x="863" y="2" width="1" height="1" fill="#5e5e62"/><rect x="862" y="4" width="1" height="1" fill="#5e5e62"/><rect x="864" y="0" width="1" height="1" fill="#5e5e62"/><rect x="865" y="2" width="1" height="1" fill="#5e5e62"/><rect x="864" y="4" width="1" height="1" fill="#5e5e62"/><rect x="866" y="0" width="1" height="1" fill="#5e5e62"/><rect x="867" y="2" width="1" height="1" fill="#5e5e62"/><rect x="866" y="4" width="1" height="1" fill="#5e5e62"/><rect x="868" y="0" width="1" height="1" fill="#5e5e62"/><rect x="869" y="2" width="1" height="1" fill="#5e5e62"/><rect x="868" y="4" width="1" height="1" fill="#5e5e62"/><rect x="870" y="0" width="1" height="1" fill="#5e5e62"/><rect x="871" y="2" width="1" height="1" fill="#5e5e62"/><rect x="870" y="4" width="1" height="1" fill="#5e5e62"/><rect x="872" y="0" width="1" height="1" fill="#5e5e62"/><rect x="873" y="2" width="1" height="1" fill="#5e5e62"/><rect x="872" y="4" width="1" height="1" fill="#5e5e62"/><rect x="874" y="0" width="1" height="1" fill="#5e5e62"/><rect x="875" y="2" width="1" height="1" fill="#5e5e62"/><rect x="874" y="4" width="1" height="1" fill="#5e5e62"/><rect x="876" y="0" width="1" height="1" fill="#5e5e62"/><rect x="877" y="2" width="1" height="1" fill="#5e5e62"/><rect x="876" y="4" width="1" height="1" fill="#5e5e62"/><rect x="878" y="0" width="1" height="1" fill="#5e5e62"/><rect x="879" y="2" width="1" height="1" fill="#5e5e62"/><rect x="878" y="4" width="1" height="1" fill="#5e5e62"/><rect x="880" y="0" width="1" height="1" fill="#5e5e62"/><rect x="881" y="2" width="1" height="1" fill="#5e5e62"/><rect x="880" y="4" width="1" height="1" fill="#5e5e62"/><rect x="882" y="0" width="1" height="1" fill="#5e5e62"/><rect x="883" y="2" width="1" height="1" fill="#5e5e62"/><rect x="882" y="4" width="1" height="1" fill="#5e5e62"/><rect x="884" y="0" width="1" height="1" fill="#5e5e62"/><rect x="885" y="2" width="1" height="1" fill="#5e5e62"/><rect x="884" y="4" width="1" height="1" fill="#5e5e62"/><rect x="886" y="0" width="1" height="1" fill="#5e5e62"/><rect x="887" y="2" width="1" height="1" fill="#5e5e62"/><rect x="886" y="4" width="1" height="1" fill="#5e5e62"/><rect x="888" y="0" width="1" height="1" fill="#5e5e62"/><rect x="889" y="2" width="1" height="1" fill="#5e5e62"/><rect x="888" y="4" width="1" height="1" fill="#5e5e62"/><rect x="890" y="0" width="1" height="1" fill="#5e5e62"/><rect x="891" y="2" width="1" height="1" fill="#5e5e62"/><rect x="890" y="4" width="1" height="1" fill="#5e5e62"/><rect x="892" y="0" width="1" height="1" fill="#5e5e62"/><rect x="893" y="2" width="1" height="1" fill="#5e5e62"/><rect x="892" y="4" width="1" height="1" fill="#5e5e62"/><rect x="894" y="0" width="1" height="1" fill="#5e5e62"/><rect x="895" y="2" width="1" height="1" fill="#5e5e62"/><rect x="894" y="4" width="1" height="1" fill="#5e5e62"/><rect x="896" y="0" width="1" height="1" fill="#5e5e62"/><rect x="897" y="2" width="1" height="1" fill="#5e5e62"/><rect x="896" y="4" width="1" height="1" fill="#5e5e62"/><rect x="898" y="0" width="1" height="1" fill="#5e5e62"/><rect x="899" y="2" width="1" height="1" fill="#5e5e62"/><rect x="898" y="4" width="1" height="1" fill="#5e5e62"/><rect x="900" y="0" width="1" height="1" fill="#5e5e62"/><rect x="901" y="2" width="1" height="1" fill="#5e5e62"/><rect x="900" y="4" width="1" height="1" fill="#5e5e62"/><rect x="902" y="0" width="1" height="1" fill="#5e5e62"/><rect x="903" y="2" width="1" height="1" fill="#5e5e62"/><rect x="902" y="4" width="1" height="1" fill="#5e5e62"/><rect x="904" y="0" width="1" height="1" fill="#5e5e62"/><rect x="905" y="2" width="1" height="1" fill="#5e5e62"/><rect x="904" y="4" width="1" height="1" fill="#5e5e62"/><rect x="906" y="0" width="1" height="1" fill="#5e5e62"/><rect x="907" y="2" width="1" height="1" fill="#5e5e62"/><rect x="906" y="4" width="1" height="1" fill="#5e5e62"/><rect x="908" y="0" width="1" height="1" fill="#5e5e62"/><rect x="909" y="2" width="1" height="1" fill="#5e5e62"/><rect x="908" y="4" width="1" height="1" fill="#5e5e62"/><rect x="910" y="0" width="1" height="1" fill="#5e5e62"/><rect x="911" y="2" width="1" height="1" fill="#5e5e62"/><rect x="910" y="4" width="1" height="1" fill="#5e5e62"/><rect x="912" y="0" width="1" height="1" fill="#5e5e62"/><rect x="913" y="2" width="1" height="1" fill="#5e5e62"/><rect x="912" y="4" width="1" height="1" fill="#5e5e62"/><rect x="914" y="0" width="1" height="1" fill="#5e5e62"/><rect x="915" y="2" width="1" height="1" fill="#5e5e62"/><rect x="914" y="4" width="1" height="1" fill="#5e5e62"/><rect x="916" y="0" width="1" height="1" fill="#5e5e62"/><rect x="917" y="2" width="1" height="1" fill="#5e5e62"/><rect x="916" y="4" width="1" height="1" fill="#5e5e62"/><rect x="918" y="0" width="1" height="1" fill="#5e5e62"/><rect x="919" y="2" width="1" height="1" fill="#5e5e62"/><rect x="918" y="4" width="1" height="1" fill="#5e5e62"/><rect x="920" y="0" width="1" height="1" fill="#5e5e62"/><rect x="921" y="2" width="1" height="1" fill="#5e5e62"/><rect x="920" y="4" width="1" height="1" fill="#5e5e62"/><rect x="922" y="0" width="1" height="1" fill="#5e5e62"/><rect x="923" y="2" width="1" height="1" fill="#5e5e62"/><rect x="922" y="4" width="1" height="1" fill="#5e5e62"/><rect x="924" y="0" width="1" height="1" fill="#5e5e62"/><rect x="925" y="2" width="1" height="1" fill="#5e5e62"/><rect x="924" y="4" width="1" height="1" fill="#5e5e62"/><rect x="926" y="0" width="1" height="1" fill="#5e5e62"/><rect x="927" y="2" width="1" height="1" fill="#5e5e62"/><rect x="926" y="4" width="1" height="1" fill="#5e5e62"/><rect x="928" y="0" width="1" height="1" fill="#5e5e62"/><rect x="929" y="2" width="1" height="1" fill="#5e5e62"/><rect x="928" y="4" width="1" height="1" fill="#5e5e62"/><rect x="930" y="0" width="1" height="1" fill="#5e5e62"/><rect x="931" y="2" width="1" height="1" fill="#5e5e62"/><rect x="930" y="4" width="1" height="1" fill="#5e5e62"/><rect x="932" y="0" width="1" height="1" fill="#5e5e62"/><rect x="933" y="2" width="1" height="1" fill="#5e5e62"/><rect x="932" y="4" width="1" height="1" fill="#5e5e62"/><rect x="934" y="0" width="1" height="1" fill="#5e5e62"/><rect x="935" y="2" width="1" height="1" fill="#5e5e62"/><rect x="934" y="4" width="1" height="1" fill="#5e5e62"/><rect x="936" y="0" width="1" height="1" fill="#5e5e62"/><rect x="937" y="2" width="1" height="1" fill="#5e5e62"/><rect x="936" y="4" width="1" height="1" fill="#5e5e62"/><rect x="938" y="0" width="1" height="1" fill="#5e5e62"/><rect x="939" y="2" width="1" height="1" fill="#5e5e62"/><rect x="938" y="4" width="1" height="1" fill="#5e5e62"/></svg>
<svg style="left:1287px;top:619px" width="8" height="5" viewBox="0 0 8 5"><path d="M0 0 H8 L4 4.5 Z" fill="#f1f1f1"/></svg>
<svg style="left:1302px;top:616px" width="9" height="12" viewBox="0 0 9 12"><path d="M2 0.5 H7 M2.5 0.5 V7 M6.5 0.5 V7 M0.5 7 H8.5 M4.5 7 V11.5" fill="none" stroke="#f1f1f1" stroke-width="1.2"/><rect x="4.5" y="1" width="2" height="6" fill="#f1f1f1"/></svg>
<svg style="left:1318px;top:617px" width="10" height="9" viewBox="0 0 10 9"><path d="M0.5 0.5 L9.5 8.5 M9.5 0.5 L0.5 8.5" stroke="#f1f1f1" stroke-width="1.4"/></svg>
<div class="t" style="left:297px;top:640.34px;font-size:12px;color:#f1f1f1;letter-spacing:0.15px">Show output from:</div>
<div class="a" style="left:403px;top:635px;width:300px;height:20px;background:#333337;border:1px solid #434346"></div>
<div class="t" style="left:407px;top:640.34px;font-size:12px;color:#f1f1f1;">Debug</div>
<svg style="left:693px;top:644px" width="6" height="3" viewBox="0 0 6 3"><path d="M0 0 H6 L3 3 Z" fill="#999"/></svg>
<div class="a" style="left:710px;top:636px;width:1px;height:18px;background:#46464a;"></div>
<div class="a" style="left:740px;top:636px;width:1px;height:18px;background:#46464a;"></div>
<div class="a" style="left:792px;top:636px;width:1px;height:18px;background:#46464a;"></div>
<div class="a" style="left:822px;top:636px;width:1px;height:18px;background:#46464a;"></div>
<svg style="left:719px;top:638px" width="13" height="14" viewBox="0 0 13 14"><path d="M5 0.5 A3 3 0 1 0 2.5 5.5 L2.5 6.5" fill="none" stroke="#555557" stroke-width="1.2"/><path d="M1 6 L2.5 8 L4 6" fill="none" stroke="#555557"/><path d="M4 8.5 H13 M4 13.5 H13" stroke="#555557"/><rect x="3.5" y="10" width="6" height="2.5" fill="#555557"/></svg>
<svg style="left:749px;top:638px" width="12" height="14" viewBox="0 0 12 14"><path d="M0 4 H6 M2.5 1.5 L0 4 L2.5 6.5" fill="none" stroke="#555557" stroke-width="1.2"/><path d="M2 8.5 H12 M2 11 H12 M2 13.5 H12" stroke="#555557"/></svg>
<svg style="left:771px;top:638px" width="12" height="14" viewBox="0 0 12 14"><path d="M0 4 H6 M3.5 1.5 L6 4 L3.5 6.5" fill="none" stroke="#555557" stroke-width="1.2"/><path d="M2 8.5 H12 M2 11 H12 M2 13.5 H12" stroke="#555557"/></svg>
<svg style="left:800px;top:637px" width="14" height="16" viewBox="0 0 14 16"><path d="M0.5 0.5 L4.5 4.5 M4.5 0.5 L0.5 4.5" stroke="#f48771" stroke-width="1.5"/><path d="M6 2 H14 M6 5.5 H14 M0 9 H14 M0 12.5 H14 M0 15.5 H14" stroke="#f1f1f1" stroke-width="1.5"/></svg>
<svg style="left:829px;top:638px" width="16" height="14" viewBox="0 0 16 14"><text x="0" y="6" font-family="Liberation Sans" font-size="7" fill="#f1f1f1">ab</text><text x="0" y="13" font-family="Liberation Sans" font-size="7" fill="#f1f1f1">c</text><path d="M14.5 3 V10 H7.5 M10 7.5 L7.5 10 L10 12.5" fill="none" stroke="#f1f1f1" stroke-width="1.5"/></svg>
<div class="a" style="left:290px;top:658px;width:1025px;height:42px;background:#1e1e1e;"></div>
<div class="a" style="left:290px;top:658px;width:1025px;height:42px;overflow:hidden">
<div class="c" style="left:13px;top:-6.29px">&#x27;Hotel-SoftWare2.exe&#x27; (CLR v4.0.30319: Hotel-SoftWare2.exe): Loaded &#x27;C:\Windows\Microsoft.Net\assembly\GAC_MSIL\System.Xml.Linq\v4.0_4.0.0.0__b77a5c561934e089\System.Xml.Linq.dll&#x27;.</div>
<div class="c" style="left:13px;top:8.71px">&#x27;Hotel-SoftWare2.exe&#x27; (CLR v4.0.30319: Hotel-SoftWare2.exe): Loaded &#x27;C:\Windows\Microsoft.Net\assembly\GAC_32\System.EnterpriseServices\v4.0_4.0.0.0__b03f5f7f11d50a3a\System.EnterpriseServices.dll&#x27;.</div>
<div class="c" style="left:13px;top:23.71px">&#x27;Hotel-SoftWare2.exe&#x27; (CLR v4.0.30319: Hotel-SoftWare2.exe): Loaded &#x27;C:\Windows\Microsoft.Net\assembly\GAC_32\System.EnterpriseServices\v4.0_4.0.0.0__b03f5f7f11d50a3a\System.EnterpriseServices.Wrapper.dll&#x27;.</div>
<div class="c" style="left:13px;top:38.71px">&#x27;Hotel-SoftWare2.exe&#x27; (CLR v4.0.30319: Hotel-SoftWare2.exe): Loaded &#x27;C:\Windows\Microsoft.Net\assembly\GAC_MSIL\System.Runtime.Remoting\v4.0_4.0.0.0__b77a5c561934e089\System.Runtime.Remoting.dll&#x27;.</div>
</div>
<div class="a" style="left:1315px;top:658px;width:20px;height:42px;background:#3e3e42;"></div>
<svg style="left:1320px;top:666px" width="10" height="5" viewBox="0 0 10 5"><path d="M0 5 H10 L5 0 Z" fill="#999"/></svg>
<div class="a" style="left:1319px;top:675px;width:11px;height:6px;background:#686868;"></div>
<div class="a" style="left:1315px;top:682px;width:20px;height:2px;background:#e8e8e8;"></div>
<svg style="left:1320px;top:689px" width="10" height="5" viewBox="0 0 10 5"><path d="M0 0 H10 L5 5 Z" fill="#999"/></svg>
<div class="a" style="left:290px;top:700px;width:1045px;height:17px;background:#3e3e42;"></div>
<svg style="left:296px;top:704px" width="5" height="9" viewBox="0 0 5 9"><path d="M5 0 V9 L0 4.5 Z" fill="#999"/></svg>
<div class="a" style="left:307px;top:704px;width:381px;height:9px;background:#686868;"></div>
<svg style="left:1304px;top:704px" width="5" height="9" viewBox="0 0 5 9"><path d="M0 0 V9 L5 4.5 Z" fill="#999"/></svg>
<div class="t" style="left:295px;top:720.84px;font-size:12px;color:#f1f1f1;letter-spacing:-0.35px">Error List ...</div>
<div class="a" style="left:359px;top:717px;width:50px;height:21px;background:#252526;border:1px solid #3f3f46;border-top:none"></div>
<div class="t" style="left:365.2px;top:720.84px;font-size:12px;color:#0097fb;letter-spacing:0.4px">Output</div>
<div class="a" style="left:0px;top:744px;width:1366px;height:22px;background:#007acc;"></div>
<div class="a" style="left:0px;top:766px;width:1366px;height:2px;background:#1c2530;"></div>
<div class="a" style="left:48px;top:766px;width:343px;height:2px;background:#3c3c3c;"></div>
<div class="a" style="left:637px;top:766px;width:49px;height:2px;background:#4a4a4a;"></div>
<svg style="left:4px;top:751px" width="16" height="11" viewBox="0 0 16 11"><path d="M3 0.7 H15.3 L13 10.3 H0.7 Z" fill="none" stroke="#fff" stroke-width="1.2"/><path d="M4.5 4 H12 M4 6.5 H9" stroke="#fff" stroke-width="1.1"/></svg>
<div class="t" style="left:27.3px;top:749.64px;font-size:12px;color:#ffffff;letter-spacing:-0.4px">Ready</div>
<svg style="left:1015px;top:751px" width="10" height="11" viewBox="0 0 10 11"><path d="M5 11 V1.5 M0.8 5.5 L5 1.2 L9.2 5.5" fill="none" stroke="#fff" stroke-width="1.6"/></svg>
<div class="t" style="left:1033.5px;top:750.34px;font-size:12px;color:#ffffff;">0</div>
<svg style="left:1064px;top:750px" width="13" height="12" viewBox="0 0 13 12"><path d="M1 11 L1.5 8.5 L9 1 L11.5 3.5 L4 11 Z" fill="#fff"/></svg>
<div class="t" style="left:1084px;top:750.34px;font-size:12px;color:#ffffff;letter-spacing:-0.2px">99*</div>
<svg style="left:1124px;top:750px" width="15" height="15" viewBox="0 0 15 15"><path d="M7.5 0.3 L14.7 7.5 L7.5 14.7 L0.3 7.5 Z" fill="#fff"/><circle cx="6" cy="5" r="1.3" fill="#007acc"/><circle cx="9" cy="9.5" r="1.3" fill="#007acc"/><path d="M6 5 L9 9.5 M6 5 V11" stroke="#007acc" stroke-width="1.1"/></svg>
<div class="t" style="left:1145.3px;top:750.34px;font-size:12px;color:#ffffff;letter-spacing:0.05px">datproqhna</div>
<svg style="left:1230px;top:750px" width="15" height="14" viewBox="0 0 15 14"><circle cx="2.5" cy="2.5" r="2" fill="#fff"/><circle cx="12.5" cy="2.5" r="2" fill="#fff"/><path d="M2.5 2.5 L7.5 8 L12.5 2.5 M7.5 8 V14 M7.5 8 L9.5 5" fill="none" stroke="#fff" stroke-width="1.8"/></svg>
<div class="t" style="left:1250.5px;top:750.34px;font-size:12px;color:#ffffff;letter-spacing:0.1px">master</div>
<svg style="left:1293px;top:754px" width="8" height="5" viewBox="0 0 8 5"><path d="M0 5 H8 L4 0 Z" fill="#fff"/></svg>
<svg style="left:1328px;top:749px" width="13" height="14" viewBox="0 0 13 14"><path d="M6.5 0.5 C3 0.5 2 3 2 6 V9 L0.5 11 H12.5 L11 9 V6 C11 3 10 0.5 6.5 0.5 Z" fill="#d8d8d8"/><rect x="5" y="11.5" width="3" height="2" fill="#d8d8d8"/></svg>
<svg style="left:1336px;top:753px" width="12" height="12" viewBox="0 0 12 12"><circle cx="6" cy="6" r="5.6" fill="#e51400"/></svg>
<div class="t" style="left:1339px;top:755.5px;font-size:9px;color:#fff;font-weight:bold">3</div>
</body></html>
